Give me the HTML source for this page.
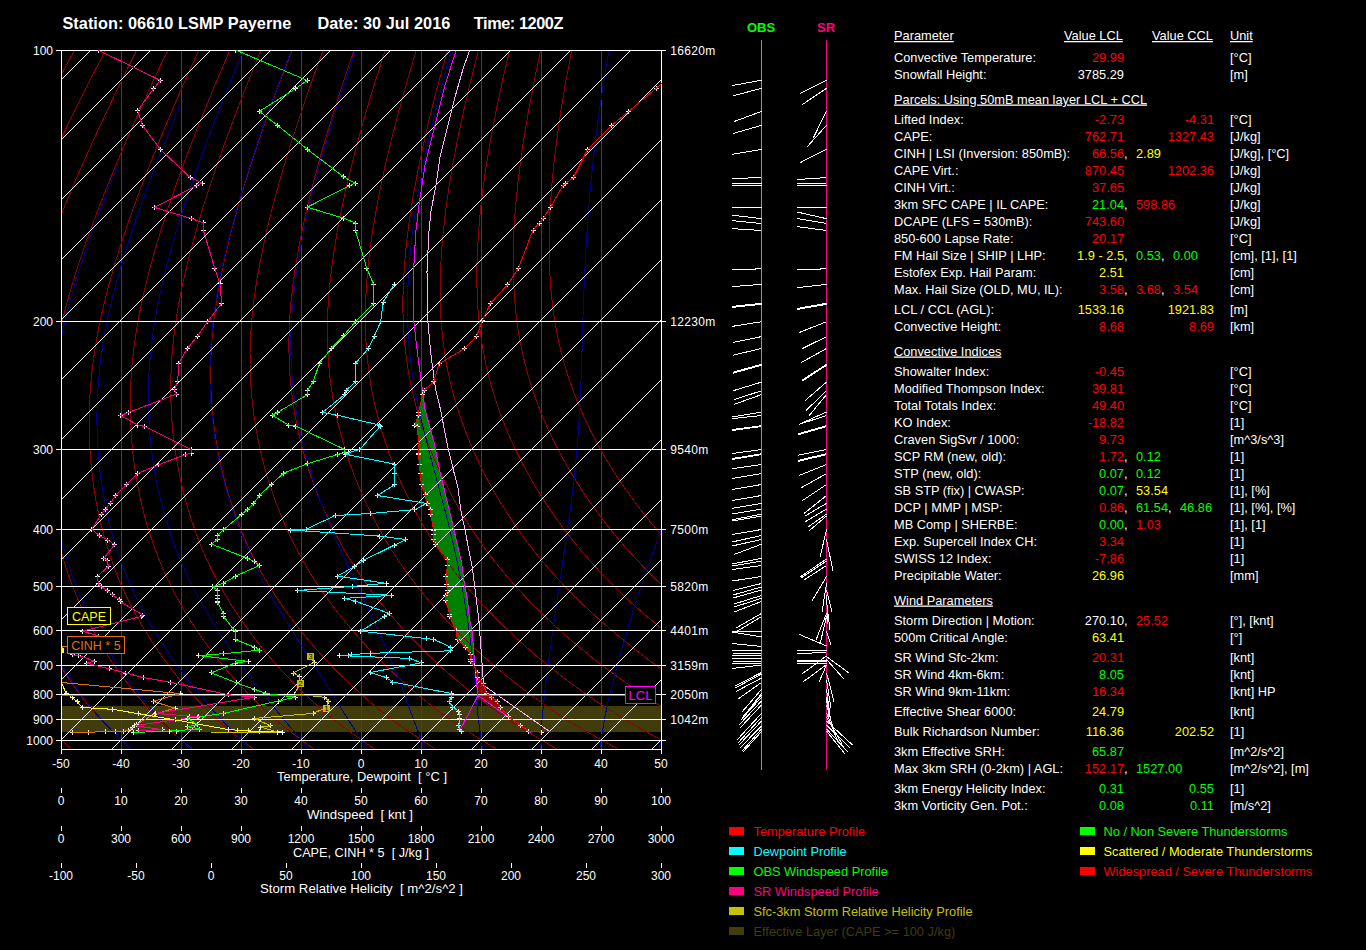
<!DOCTYPE html>
<html><head><meta charset="utf-8"><style>
html,body{margin:0;padding:0;background:#000;overflow:hidden}
svg{display:block}
text{font-family:'Liberation Sans', sans-serif}
</style></head><body><svg width="1366" height="950" viewBox="0 0 1366 950"><defs><clipPath id="pc"><rect x="61" y="50" width="601" height="700"/></clipPath></defs><g clip-path="url(#pc)"><rect x="61" y="706" width="600" height="26" fill="#403c0c"/><polygon points="422.9,394.0 422.8,394.3 418.4,412.4 418.4,415.3 414.7,425.7 417.5,426.5 418.9,449.5 418.9,453.6 418.9,454.5 419.1,464.4 420.3,473.1 421.4,484.6 425.0,494.9 427.2,503.4 430.2,509.6 430.9,514.0 433.6,530.3 433.0,534.9 433.0,539.5 435.9,544.8 447.5,559.8 447.5,565.6 445.8,576.6 446.3,584.1 447.5,590.5 445.8,595.7 445.8,600.3 449.8,614.3 449.8,616.5 456.0,630.9 457.4,639.0 465.5,647.1 470.7,654.5 470.0,659.6 470.7,661.9 474.0,665.8 474.3,666.5 472.2,631.0 469.5,618.9 467.5,600.0 464.5,584.1 461.4,562.1 453.9,529.7 449.8,512.0 440.5,474.3 433.9,441.9 425.0,409.5 422.9,394.0" fill="#008000" stroke="#008000" stroke-width="0.5"/><polygon points="474.5,667.0 477.1,672.6 477.6,677.4 483.4,683.2 486.6,693.7 491.8,697.4 497.1,701.0 500.3,707.4 508.7,716.8 509.0,717.0 500.0,711.0 478.0,695.7 475.1,669.0 474.9,667.0" fill="#900000" stroke="#900000" stroke-width="0.5"/><line x1="121.5" y1="50" x2="121.5" y2="749" stroke="#007000"/><line x1="181.5" y1="50" x2="181.5" y2="749" stroke="#007000"/><line x1="241.5" y1="50" x2="241.5" y2="749" stroke="#007000"/><line x1="301.5" y1="50" x2="301.5" y2="749" stroke="#007000"/><line x1="361.5" y1="50" x2="361.5" y2="749" stroke="#007000"/><line x1="421.5" y1="50" x2="421.5" y2="749" stroke="#007000"/><line x1="481.5" y1="50" x2="481.5" y2="749" stroke="#007000"/><line x1="541.5" y1="50" x2="541.5" y2="749" stroke="#007000"/><line x1="601.5" y1="50" x2="601.5" y2="749" stroke="#007000"/><polyline points="9.5,749.0 8.2,747.5 6.8,746.0 5.5,744.5 4.1,743.0 2.7,741.5 1.4,740.0 -0.0,738.4 -1.4,736.9 -2.8,735.3 -4.2,733.8 -5.6,732.2 -7.0,730.5 -8.3,728.9 -9.7,727.2 -11.1,725.6 -12.5,723.9 -13.9,722.1 -15.2,720.4 -16.6,718.6 -17.9,716.8 -19.3,714.9 -20.6,713.1 -21.9,711.2 -23.2,709.2 -24.5,707.3 -25.8,705.3 -27.1,703.3 -28.4,701.2 -29.7,699.2 -30.9,697.1 -32.2,694.9 -33.5,692.8 -34.8,690.6 -36.0,688.4 -37.3,686.2 -38.6,683.9 -39.8,681.6 -41.1,679.3 -42.3,677.0 -43.6,674.6 -44.8,672.1 -46.1,669.7 -47.3,667.2 -48.5,664.7 -49.7,662.1 -50.9,659.5 -52.1,656.8 -53.3,654.1 -54.4,651.4 -55.6,648.6 -56.8,645.8 -57.9,642.9 -59.0,640.0 -60.1,637.0 -61.3,634.0 -62.3,630.9 -63.4,627.8 -64.5,624.6 -65.6,621.4 -66.6,618.1 -67.7,614.8 -68.7,611.4 -69.7,607.9 -70.7,604.4 -71.6,600.8 -72.6,597.1 -73.5,593.4 -74.4,589.5 -75.2,585.6 -76.0,581.6 -76.8,577.6 -77.6,573.4 -78.3,569.1 -79.0,564.7 -79.6,560.2 -80.2,555.7 -80.7,551.0 -81.2,546.2 -81.7,541.2 -82.1,536.2 -82.4,531.0 -82.7,525.7 -83.0,520.2 -83.1,514.6 -83.2,508.8 -83.3,502.9 -83.2,496.8 -83.1,490.5 -82.9,484.0 -82.5,477.3 -82.1,470.4 -81.6,463.3 -80.9,456.0 -80.2,448.4 -79.2,440.5 -78.2,432.3 -76.9,423.8 -75.5,414.9 -73.8,405.7 -71.9,396.1 -69.7,386.0 -67.2,375.5 -64.4,364.4 -61.2,352.7 -57.6,340.3 -53.5,327.3 -48.8,313.4 -43.5,298.6 -37.5,282.9 -30.9,266.1 -23.4,248.2 -15.1,229.1 -5.9,208.7 4.4,186.8 15.7,163.3 28.3,138.1 42.2,110.9 57.6,81.6 74.5,50.0" fill="none" stroke="#900000" stroke-width="1" shape-rendering="crispEdges"/><polyline points="70.4,749.0 68.9,747.5 67.4,746.0 65.9,744.5 64.4,743.0 62.9,741.5 61.4,740.0 59.9,738.4 58.3,736.9 56.8,735.3 55.3,733.8 53.8,732.2 52.2,730.5 50.7,728.9 49.2,727.2 47.6,725.6 46.1,723.9 44.6,722.1 43.1,720.4 41.6,718.6 40.1,716.8 38.6,714.9 37.1,713.1 35.7,711.2 34.2,709.2 32.8,707.3 31.3,705.3 29.9,703.3 28.4,701.2 27.0,699.2 25.5,697.1 24.1,694.9 22.7,692.8 21.2,690.6 19.8,688.4 18.4,686.2 16.9,683.9 15.5,681.6 14.1,679.3 12.7,677.0 11.2,674.6 9.8,672.1 8.4,669.7 7.0,667.2 5.6,664.7 4.3,662.1 2.9,659.5 1.5,656.8 0.1,654.1 -1.2,651.4 -2.6,648.6 -3.9,645.8 -5.2,642.9 -6.5,640.0 -7.8,637.0 -9.1,634.0 -10.4,630.9 -11.7,627.8 -13.0,624.6 -14.3,621.4 -15.5,618.1 -16.8,614.8 -18.0,611.4 -19.2,607.9 -20.4,604.4 -21.6,600.8 -22.7,597.1 -23.8,593.4 -24.9,589.5 -26.0,585.6 -27.1,581.6 -28.1,577.6 -29.1,573.4 -30.0,569.1 -30.9,564.7 -31.8,560.2 -32.6,555.7 -33.4,551.0 -34.2,546.2 -34.9,541.2 -35.6,536.2 -36.2,531.0 -36.7,525.7 -37.2,520.2 -37.7,514.6 -38.0,508.8 -38.3,502.9 -38.6,496.8 -38.7,490.5 -38.8,484.0 -38.8,477.3 -38.7,470.4 -38.4,463.3 -38.1,456.0 -37.6,448.4 -37.1,440.5 -36.3,432.3 -35.4,423.8 -34.3,414.9 -33.0,405.7 -31.4,396.1 -29.6,386.0 -27.5,375.5 -25.1,364.4 -22.3,352.7 -19.1,340.3 -15.4,327.3 -11.1,313.4 -6.3,298.6 -0.8,282.9 5.4,266.1 12.4,248.2 20.2,229.1 28.9,208.7 38.6,186.8 49.4,163.3 61.3,138.1 74.6,110.9 89.3,81.6 105.6,50.0" fill="none" stroke="#900000" stroke-width="1" shape-rendering="crispEdges"/><polyline points="131.2,749.0 129.6,747.5 128.0,746.0 126.3,744.5 124.7,743.0 123.1,741.5 121.4,740.0 119.7,738.4 118.1,736.9 116.4,735.3 114.8,733.8 113.1,732.2 111.4,730.5 109.7,728.9 108.1,727.2 106.4,725.6 104.7,723.9 103.1,722.1 101.4,720.4 99.8,718.6 98.1,716.8 96.5,714.9 94.9,713.1 93.2,711.2 91.6,709.2 90.0,707.3 88.4,705.3 86.8,703.3 85.2,701.2 83.6,699.2 82.0,697.1 80.4,694.9 78.8,692.8 77.2,690.6 75.6,688.4 74.0,686.2 72.4,683.9 70.9,681.6 69.3,679.3 67.7,677.0 66.1,674.6 64.5,672.1 62.9,669.7 61.3,667.2 59.8,664.7 58.2,662.1 56.7,659.5 55.1,656.8 53.6,654.1 52.0,651.4 50.5,648.6 49.0,645.8 47.5,642.9 46.0,640.0 44.5,637.0 43.0,634.0 41.5,630.9 40.0,627.8 38.5,624.6 37.0,621.4 35.6,618.1 34.1,614.8 32.7,611.4 31.3,607.9 29.9,604.4 28.5,600.8 27.1,597.1 25.8,593.4 24.5,589.5 23.2,585.6 21.9,581.6 20.6,577.6 19.4,573.4 18.2,569.1 17.1,564.7 16.0,560.2 14.9,555.7 13.9,551.0 12.9,546.2 11.9,541.2 11.0,536.2 10.1,531.0 9.3,525.7 8.5,520.2 7.8,514.6 7.2,508.8 6.6,502.9 6.1,496.8 5.6,490.5 5.2,484.0 5.0,477.3 4.8,470.4 4.7,463.3 4.7,456.0 4.9,448.4 5.1,440.5 5.5,432.3 6.1,423.8 6.9,414.9 7.8,405.7 9.0,396.1 10.4,386.0 12.2,375.5 14.2,364.4 16.6,352.7 19.4,340.3 22.7,327.3 26.5,313.4 30.9,298.6 35.9,282.9 41.7,266.1 48.2,248.2 55.5,229.1 63.6,208.7 72.8,186.8 83.0,163.3 94.4,138.1 107.0,110.9 121.1,81.6 136.7,50.0" fill="none" stroke="#900000" stroke-width="1" shape-rendering="crispEdges"/><polyline points="192.0,749.0 190.3,747.5 188.5,746.0 186.8,744.5 185.0,743.0 183.2,741.5 181.4,740.0 179.6,738.4 177.8,736.9 176.0,735.3 174.2,733.8 172.4,732.2 170.6,730.5 168.8,728.9 167.0,727.2 165.2,725.6 163.3,723.9 161.5,722.1 159.7,720.4 157.9,718.6 156.1,716.8 154.4,714.9 152.6,713.1 150.8,711.2 149.1,709.2 147.3,707.3 145.5,705.3 143.8,703.3 142.0,701.2 140.3,699.2 138.5,697.1 136.8,694.9 135.0,692.8 133.2,690.6 131.5,688.4 129.7,686.2 128.0,683.9 126.2,681.6 124.4,679.3 122.7,677.0 120.9,674.6 119.2,672.1 117.4,669.7 115.7,667.2 113.9,664.7 112.2,662.1 110.4,659.5 108.7,656.8 107.0,654.1 105.3,651.4 103.6,648.6 101.9,645.8 100.1,642.9 98.4,640.0 96.8,637.0 95.1,634.0 93.4,630.9 91.7,627.8 90.0,624.6 88.4,621.4 86.7,618.1 85.1,614.8 83.4,611.4 81.8,607.9 80.2,604.4 78.6,600.8 77.0,597.1 75.4,593.4 73.9,589.5 72.3,585.6 70.8,581.6 69.4,577.6 67.9,573.4 66.5,569.1 65.1,564.7 63.8,560.2 62.4,555.7 61.2,551.0 59.9,546.2 58.7,541.2 57.5,536.2 56.4,531.0 55.3,525.7 54.3,520.2 53.3,514.6 52.4,508.8 51.5,502.9 50.7,496.8 50.0,490.5 49.3,484.0 48.7,477.3 48.2,470.4 47.8,463.3 47.6,456.0 47.4,448.4 47.3,440.5 47.4,432.3 47.6,423.8 48.0,414.9 48.6,405.7 49.5,396.1 50.5,386.0 51.8,375.5 53.5,364.4 55.5,352.7 57.9,340.3 60.8,327.3 64.1,313.4 68.1,298.6 72.7,282.9 77.9,266.1 83.9,248.2 90.7,229.1 98.4,208.7 107.0,186.8 116.6,163.3 127.4,138.1 139.5,110.9 152.9,81.6 167.8,50.0" fill="none" stroke="#900000" stroke-width="1" shape-rendering="crispEdges"/><polyline points="252.8,749.0 251.0,747.5 249.1,746.0 247.2,744.5 245.3,743.0 243.4,741.5 241.4,740.0 239.5,738.4 237.6,736.9 235.6,735.3 233.7,733.8 231.7,732.2 229.8,730.5 227.8,728.9 225.9,727.2 223.9,725.6 222.0,723.9 220.0,722.1 218.1,720.4 216.1,718.6 214.2,716.8 212.2,714.9 210.3,713.1 208.4,711.2 206.5,709.2 204.6,707.3 202.6,705.3 200.7,703.3 198.8,701.2 196.9,699.2 195.0,697.1 193.1,694.9 191.2,692.8 189.2,690.6 187.3,688.4 185.4,686.2 183.5,683.9 181.5,681.6 179.6,679.3 177.7,677.0 175.8,674.6 173.8,672.1 171.9,669.7 170.0,667.2 168.1,664.7 166.1,662.1 164.2,659.5 162.3,656.8 160.4,654.1 158.5,651.4 156.6,648.6 154.7,645.8 152.8,642.9 150.9,640.0 149.1,637.0 147.2,634.0 145.3,630.9 143.4,627.8 141.5,624.6 139.7,621.4 137.8,618.1 136.0,614.8 134.1,611.4 132.3,607.9 130.4,604.4 128.6,600.8 126.8,597.1 125.0,593.4 123.3,589.5 121.5,585.6 119.8,581.6 118.1,577.6 116.4,573.4 114.8,569.1 113.1,564.7 111.6,560.2 110.0,555.7 108.5,551.0 107.0,546.2 105.5,541.2 104.1,536.2 102.7,531.0 101.3,525.7 100.0,520.2 98.8,514.6 97.6,508.8 96.4,502.9 95.3,496.8 94.3,490.5 93.4,484.0 92.5,477.3 91.7,470.4 91.0,463.3 90.4,456.0 89.9,448.4 89.5,440.5 89.2,432.3 89.1,423.8 89.2,414.9 89.4,405.7 89.9,396.1 90.6,386.0 91.5,375.5 92.8,364.4 94.4,352.7 96.4,340.3 98.8,327.3 101.8,313.4 105.3,298.6 109.4,282.9 114.2,266.1 119.7,248.2 126.0,229.1 133.1,208.7 141.2,186.8 150.3,163.3 160.5,138.1 171.9,110.9 184.6,81.6 198.8,50.0" fill="none" stroke="#900000" stroke-width="1" shape-rendering="crispEdges"/><polyline points="313.6,749.0 311.6,747.5 309.6,746.0 307.6,744.5 305.6,743.0 303.5,741.5 301.5,740.0 299.4,738.4 297.3,736.9 295.2,735.3 293.1,733.8 291.1,732.2 289.0,730.5 286.9,728.9 284.8,727.2 282.7,725.6 280.6,723.9 278.5,722.1 276.4,720.4 274.3,718.6 272.2,716.8 270.1,714.9 268.0,713.1 266.0,711.2 263.9,709.2 261.8,707.3 259.8,705.3 257.7,703.3 255.6,701.2 253.6,699.2 251.5,697.1 249.4,694.9 247.3,692.8 245.3,690.6 243.2,688.4 241.1,686.2 239.0,683.9 236.9,681.6 234.8,679.3 232.7,677.0 230.6,674.6 228.5,672.1 226.4,669.7 224.3,667.2 222.2,664.7 220.1,662.1 218.0,659.5 215.9,656.8 213.8,654.1 211.8,651.4 209.7,648.6 207.6,645.8 205.5,642.9 203.4,640.0 201.4,637.0 199.3,634.0 197.2,630.9 195.1,627.8 193.1,624.6 191.0,621.4 188.9,618.1 186.9,614.8 184.8,611.4 182.8,607.9 180.7,604.4 178.7,600.8 176.7,597.1 174.7,593.4 172.7,589.5 170.7,585.6 168.8,581.6 166.8,577.6 164.9,573.4 163.0,569.1 161.2,564.7 159.3,560.2 157.5,555.7 155.8,551.0 154.0,546.2 152.3,541.2 150.6,536.2 149.0,531.0 147.3,525.7 145.8,520.2 144.2,514.6 142.8,508.8 141.3,502.9 140.0,496.8 138.7,490.5 137.4,484.0 136.2,477.3 135.1,470.4 134.1,463.3 133.2,456.0 132.4,448.4 131.7,440.5 131.1,432.3 130.6,423.8 130.4,414.9 130.3,405.7 130.3,396.1 130.7,386.0 131.2,375.5 132.1,364.4 133.3,352.7 134.9,340.3 136.9,327.3 139.4,313.4 142.5,298.6 146.2,282.9 150.5,266.1 155.5,248.2 161.3,229.1 167.9,208.7 175.4,186.8 183.9,163.3 193.5,138.1 204.3,110.9 216.4,81.6 229.9,50.0" fill="none" stroke="#900000" stroke-width="1" shape-rendering="crispEdges"/><polyline points="374.5,749.0 372.3,747.5 370.2,746.0 368.0,744.5 365.8,743.0 363.7,741.5 361.5,740.0 359.3,738.4 357.1,736.9 354.8,735.3 352.6,733.8 350.4,732.2 348.1,730.5 345.9,728.9 343.7,727.2 341.4,725.6 339.2,723.9 336.9,722.1 334.7,720.4 332.5,718.6 330.2,716.8 328.0,714.9 325.8,713.1 323.5,711.2 321.3,709.2 319.1,707.3 316.9,705.3 314.6,703.3 312.4,701.2 310.2,699.2 308.0,697.1 305.7,694.9 303.5,692.8 301.3,690.6 299.0,688.4 296.8,686.2 294.5,683.9 292.2,681.6 290.0,679.3 287.7,677.0 285.4,674.6 283.2,672.1 280.9,669.7 278.6,667.2 276.3,664.7 274.1,662.1 271.8,659.5 269.5,656.8 267.3,654.1 265.0,651.4 262.7,648.6 260.5,645.8 258.2,642.9 255.9,640.0 253.6,637.0 251.4,634.0 249.1,630.9 246.8,627.8 244.6,624.6 242.3,621.4 240.0,618.1 237.8,614.8 235.5,611.4 233.2,607.9 231.0,604.4 228.8,600.8 226.5,597.1 224.3,593.4 222.1,589.5 219.9,585.6 217.7,581.6 215.6,577.6 213.4,573.4 211.3,569.1 209.2,564.7 207.1,560.2 205.1,555.7 203.0,551.0 201.0,546.2 199.1,541.2 197.1,536.2 195.2,531.0 193.4,525.7 191.5,520.2 189.7,514.6 188.0,508.8 186.3,502.9 184.6,496.8 183.0,490.5 181.5,484.0 180.0,477.3 178.6,470.4 177.3,463.3 176.0,456.0 174.9,448.4 173.9,440.5 172.9,432.3 172.2,423.8 171.5,414.9 171.1,405.7 170.8,396.1 170.7,386.0 170.9,375.5 171.4,364.4 172.2,352.7 173.4,340.3 175.0,327.3 177.1,313.4 179.7,298.6 182.9,282.9 186.8,266.1 191.3,248.2 196.6,229.1 202.6,208.7 209.6,186.8 217.6,163.3 226.6,138.1 236.7,110.9 248.2,81.6 261.0,50.0" fill="none" stroke="#900000" stroke-width="1" shape-rendering="crispEdges"/><polyline points="435.3,749.0 433.0,747.5 430.7,746.0 428.4,744.5 426.1,743.0 423.8,741.5 421.5,740.0 419.1,738.4 416.8,736.9 414.4,735.3 412.1,733.8 409.7,732.2 407.3,730.5 404.9,728.9 402.6,727.2 400.2,725.6 397.8,723.9 395.4,722.1 393.0,720.4 390.6,718.6 388.2,716.8 385.9,714.9 383.5,713.1 381.1,711.2 378.7,709.2 376.4,707.3 374.0,705.3 371.6,703.3 369.2,701.2 366.8,699.2 364.5,697.1 362.1,694.9 359.7,692.8 357.3,690.6 354.9,688.4 352.4,686.2 350.0,683.9 347.6,681.6 345.2,679.3 342.7,677.0 340.3,674.6 337.8,672.1 335.4,669.7 332.9,667.2 330.5,664.7 328.0,662.1 325.6,659.5 323.1,656.8 320.7,654.1 318.2,651.4 315.8,648.6 313.3,645.8 310.9,642.9 308.4,640.0 305.9,637.0 303.5,634.0 301.0,630.9 298.5,627.8 296.1,624.6 293.6,621.4 291.1,618.1 288.7,614.8 286.2,611.4 283.7,607.9 281.3,604.4 278.8,600.8 276.4,597.1 273.9,593.4 271.5,589.5 269.1,585.6 266.7,581.6 264.3,577.6 261.9,573.4 259.6,569.1 257.2,564.7 254.9,560.2 252.6,555.7 250.3,551.0 248.1,546.2 245.9,541.2 243.7,536.2 241.5,531.0 239.4,525.7 237.3,520.2 235.2,514.6 233.2,508.8 231.2,502.9 229.2,496.8 227.4,490.5 225.5,484.0 223.8,477.3 222.0,470.4 220.4,463.3 218.9,456.0 217.4,448.4 216.0,440.5 214.8,432.3 213.7,423.8 212.7,414.9 211.9,405.7 211.2,396.1 210.8,386.0 210.6,375.5 210.7,364.4 211.1,352.7 211.9,340.3 213.1,327.3 214.7,313.4 216.9,298.6 219.7,282.9 223.0,266.1 227.1,248.2 231.8,229.1 237.4,208.7 243.8,186.8 251.2,163.3 259.6,138.1 269.1,110.9 279.9,81.6 292.1,50.0" fill="none" stroke="#900000" stroke-width="1" shape-rendering="crispEdges"/><polyline points="496.1,749.0 493.7,747.5 491.3,746.0 488.9,744.5 486.4,743.0 484.0,741.5 481.5,740.0 479.0,738.4 476.5,736.9 474.0,735.3 471.5,733.8 469.0,732.2 466.5,730.5 464.0,728.9 461.5,727.2 458.9,725.6 456.4,723.9 453.9,722.1 451.3,720.4 448.8,718.6 446.3,716.8 443.7,714.9 441.2,713.1 438.7,711.2 436.2,709.2 433.6,707.3 431.1,705.3 428.6,703.3 426.0,701.2 423.5,699.2 420.9,697.1 418.4,694.9 415.8,692.8 413.3,690.6 410.7,688.4 408.1,686.2 405.5,683.9 402.9,681.6 400.3,679.3 397.7,677.0 395.1,674.6 392.5,672.1 389.9,669.7 387.3,667.2 384.6,664.7 382.0,662.1 379.4,659.5 376.7,656.8 374.1,654.1 371.5,651.4 368.8,648.6 366.2,645.8 363.5,642.9 360.9,640.0 358.2,637.0 355.6,634.0 352.9,630.9 350.3,627.8 347.6,624.6 344.9,621.4 342.2,618.1 339.6,614.8 336.9,611.4 334.2,607.9 331.5,604.4 328.9,600.8 326.2,597.1 323.6,593.4 320.9,589.5 318.3,585.6 315.6,581.6 313.0,577.6 310.4,573.4 307.8,569.1 305.3,564.7 302.7,560.2 300.2,555.7 297.6,551.0 295.1,546.2 292.7,541.2 290.2,536.2 287.8,531.0 285.4,525.7 283.0,520.2 280.7,514.6 278.4,508.8 276.1,502.9 273.9,496.8 271.7,490.5 269.6,484.0 267.5,477.3 265.5,470.4 263.6,463.3 261.7,456.0 259.9,448.4 258.2,440.5 256.6,432.3 255.2,423.8 253.9,414.9 252.7,405.7 251.7,396.1 250.9,386.0 250.3,375.5 250.0,364.4 250.0,352.7 250.4,340.3 251.2,327.3 252.4,313.4 254.1,298.6 256.4,282.9 259.3,266.1 262.9,248.2 267.1,229.1 272.1,208.7 278.0,186.8 284.8,163.3 292.6,138.1 301.6,110.9 311.7,81.6 323.1,50.0" fill="none" stroke="#900000" stroke-width="1" shape-rendering="crispEdges"/><polyline points="556.9,749.0 554.4,747.5 551.9,746.0 549.3,744.5 546.7,743.0 544.1,741.5 541.5,740.0 538.9,738.4 536.3,736.9 533.6,735.3 531.0,733.8 528.4,732.2 525.7,730.5 523.0,728.9 520.4,727.2 517.7,725.6 515.0,723.9 512.3,722.1 509.6,720.4 507.0,718.6 504.3,716.8 501.6,714.9 498.9,713.1 496.3,711.2 493.6,709.2 490.9,707.3 488.2,705.3 485.5,703.3 482.8,701.2 480.1,699.2 477.4,697.1 474.7,694.9 472.0,692.8 469.3,690.6 466.5,688.4 463.8,686.2 461.0,683.9 458.3,681.6 455.5,679.3 452.7,677.0 450.0,674.6 447.2,672.1 444.4,669.7 441.6,667.2 438.8,664.7 436.0,662.1 433.2,659.5 430.4,656.8 427.5,654.1 424.7,651.4 421.9,648.6 419.1,645.8 416.2,642.9 413.4,640.0 410.5,637.0 407.7,634.0 404.8,630.9 402.0,627.8 399.1,624.6 396.2,621.4 393.4,618.1 390.5,614.8 387.6,611.4 384.7,607.9 381.8,604.4 378.9,600.8 376.1,597.1 373.2,593.4 370.3,589.5 367.4,585.6 364.6,581.6 361.7,577.6 358.9,573.4 356.1,569.1 353.3,564.7 350.5,560.2 347.7,555.7 344.9,551.0 342.2,546.2 339.5,541.2 336.8,536.2 334.1,531.0 331.4,525.7 328.8,520.2 326.2,514.6 323.6,508.8 321.0,502.9 318.5,496.8 316.1,490.5 313.6,484.0 311.3,477.3 309.0,470.4 306.7,463.3 304.5,456.0 302.4,448.4 300.4,440.5 298.5,432.3 296.7,423.8 295.0,414.9 293.5,405.7 292.1,396.1 291.0,386.0 290.0,375.5 289.3,364.4 289.0,352.7 288.9,340.3 289.3,327.3 290.0,313.4 291.3,298.6 293.2,282.9 295.6,266.1 298.6,248.2 302.4,229.1 306.9,208.7 312.2,186.8 318.5,163.3 325.7,138.1 334.0,110.9 343.5,81.6 354.2,50.0" fill="none" stroke="#900000" stroke-width="1" shape-rendering="crispEdges"/><polyline points="617.8,749.0 615.1,747.5 612.4,746.0 609.7,744.5 607.0,743.0 604.3,741.5 601.5,740.0 598.8,738.4 596.0,736.9 593.3,735.3 590.5,733.8 587.7,732.2 584.9,730.5 582.1,728.9 579.3,727.2 576.4,725.6 573.6,723.9 570.8,722.1 568.0,720.4 565.1,718.6 562.3,716.8 559.5,714.9 556.7,713.1 553.8,711.2 551.0,709.2 548.2,707.3 545.3,705.3 542.5,703.3 539.6,701.2 536.8,699.2 533.9,697.1 531.0,694.9 528.2,692.8 525.3,690.6 522.4,688.4 519.5,686.2 516.5,683.9 513.6,681.6 510.7,679.3 507.7,677.0 504.8,674.6 501.8,672.1 498.9,669.7 495.9,667.2 492.9,664.7 489.9,662.1 487.0,659.5 484.0,656.8 481.0,654.1 478.0,651.4 474.9,648.6 471.9,645.8 468.9,642.9 465.9,640.0 462.8,637.0 459.8,634.0 456.7,630.9 453.7,627.8 450.6,624.6 447.5,621.4 444.5,618.1 441.4,614.8 438.3,611.4 435.2,607.9 432.1,604.4 429.0,600.8 425.9,597.1 422.8,593.4 419.7,589.5 416.6,585.6 413.5,581.6 410.5,577.6 407.4,573.4 404.4,569.1 401.3,564.7 398.3,560.2 395.2,555.7 392.2,551.0 389.2,546.2 386.3,541.2 383.3,536.2 380.3,531.0 377.4,525.7 374.5,520.2 371.6,514.6 368.8,508.8 365.9,502.9 363.2,496.8 360.4,490.5 357.7,484.0 355.0,477.3 352.4,470.4 349.9,463.3 347.4,456.0 344.9,448.4 342.6,440.5 340.3,432.3 338.2,423.8 336.2,414.9 334.3,405.7 332.6,396.1 331.0,386.0 329.7,375.5 328.7,364.4 327.9,352.7 327.4,340.3 327.3,327.3 327.7,313.4 328.5,298.6 329.9,282.9 331.9,266.1 334.4,248.2 337.7,229.1 341.6,208.7 346.4,186.8 352.1,163.3 358.7,138.1 366.4,110.9 375.2,81.6 385.3,50.0" fill="none" stroke="#900000" stroke-width="1" shape-rendering="crispEdges"/><polyline points="678.6,749.0 675.8,747.5 673.0,746.0 670.1,744.5 667.3,743.0 664.4,741.5 661.6,740.0 658.7,738.4 655.8,736.9 652.9,735.3 649.9,733.8 647.0,732.2 644.1,730.5 641.1,728.9 638.2,727.2 635.2,725.6 632.2,723.9 629.3,722.1 626.3,720.4 623.3,718.6 620.3,716.8 617.4,714.9 614.4,713.1 611.4,711.2 608.4,709.2 605.4,707.3 602.4,705.3 599.4,703.3 596.4,701.2 593.4,699.2 590.4,697.1 587.4,694.9 584.3,692.8 581.3,690.6 578.2,688.4 575.1,686.2 572.1,683.9 569.0,681.6 565.9,679.3 562.8,677.0 559.6,674.6 556.5,672.1 553.4,669.7 550.2,667.2 547.1,664.7 543.9,662.1 540.7,659.5 537.6,656.8 534.4,654.1 531.2,651.4 528.0,648.6 524.8,645.8 521.6,642.9 518.4,640.0 515.1,637.0 511.9,634.0 508.7,630.9 505.4,627.8 502.1,624.6 498.9,621.4 495.6,618.1 492.3,614.8 489.0,611.4 485.7,607.9 482.4,604.4 479.1,600.8 475.7,597.1 472.4,593.4 469.1,589.5 465.8,585.6 462.5,581.6 459.2,577.6 455.9,573.4 452.6,569.1 449.3,564.7 446.1,560.2 442.8,555.7 439.5,551.0 436.3,546.2 433.1,541.2 429.8,536.2 426.6,531.0 423.4,525.7 420.3,520.2 417.1,514.6 414.0,508.8 410.9,502.9 407.8,496.8 404.8,490.5 401.7,484.0 398.8,477.3 395.9,470.4 393.0,463.3 390.2,456.0 387.4,448.4 384.8,440.5 382.2,432.3 379.7,423.8 377.3,414.9 375.1,405.7 373.0,396.1 371.1,386.0 369.4,375.5 368.0,364.4 366.8,352.7 365.9,340.3 365.4,327.3 365.3,313.4 365.7,298.6 366.7,282.9 368.1,266.1 370.2,248.2 372.9,229.1 376.4,208.7 380.6,186.8 385.7,163.3 391.8,138.1 398.8,110.9 407.0,81.6 416.4,50.0" fill="none" stroke="#900000" stroke-width="1" shape-rendering="crispEdges"/><polyline points="739.4,749.0 736.5,747.5 733.5,746.0 730.6,744.5 727.6,743.0 724.6,741.5 721.6,740.0 718.5,738.4 715.5,736.9 712.5,735.3 709.4,733.8 706.3,732.2 703.2,730.5 700.2,728.9 697.1,727.2 693.9,725.6 690.8,723.9 687.7,722.1 684.6,720.4 681.5,718.6 678.4,716.8 675.2,714.9 672.1,713.1 669.0,711.2 665.8,709.2 662.7,707.3 659.6,705.3 656.4,703.3 653.2,701.2 650.1,699.2 646.9,697.1 643.7,694.9 640.5,692.8 637.3,690.6 634.1,688.4 630.8,686.2 627.6,683.9 624.3,681.6 621.0,679.3 617.8,677.0 614.5,674.6 611.2,672.1 607.9,669.7 604.5,667.2 601.2,664.7 597.9,662.1 594.5,659.5 591.2,656.8 587.8,654.1 584.4,651.4 581.1,648.6 577.7,645.8 574.3,642.9 570.9,640.0 567.4,637.0 564.0,634.0 560.6,630.9 557.1,627.8 553.6,624.6 550.2,621.4 546.7,618.1 543.2,614.8 539.7,611.4 536.2,607.9 532.6,604.4 529.1,600.8 525.6,597.1 522.1,593.4 518.5,589.5 515.0,585.6 511.5,581.6 507.9,577.6 504.4,573.4 500.9,569.1 497.4,564.7 493.8,560.2 490.3,555.7 486.8,551.0 483.3,546.2 479.8,541.2 476.4,536.2 472.9,531.0 469.4,525.7 466.0,520.2 462.6,514.6 459.2,508.8 455.8,502.9 452.4,496.8 449.1,490.5 445.8,484.0 442.5,477.3 439.3,470.4 436.1,463.3 433.0,456.0 430.0,448.4 427.0,440.5 424.0,432.3 421.2,423.8 418.5,414.9 415.9,405.7 413.5,396.1 411.2,386.0 409.1,375.5 407.3,364.4 405.7,352.7 404.4,340.3 403.5,327.3 403.0,313.4 402.9,298.6 403.4,282.9 404.4,266.1 406.0,248.2 408.2,229.1 411.1,208.7 414.8,186.8 419.4,163.3 424.8,138.1 431.2,110.9 438.8,81.6 447.5,50.0" fill="none" stroke="#900000" stroke-width="1" shape-rendering="crispEdges"/><polyline points="800.2,749.0 797.2,747.5 794.1,746.0 791.0,744.5 787.9,743.0 784.7,741.5 781.6,740.0 778.4,738.4 775.3,736.9 772.1,735.3 768.9,733.8 765.6,732.2 762.4,730.5 759.2,728.9 756.0,727.2 752.7,725.6 749.4,723.9 746.2,722.1 742.9,720.4 739.7,718.6 736.4,716.8 733.1,714.9 729.8,713.1 726.5,711.2 723.3,709.2 720.0,707.3 716.7,705.3 713.4,703.3 710.0,701.2 706.7,699.2 703.4,697.1 700.0,694.9 696.7,692.8 693.3,690.6 689.9,688.4 686.5,686.2 683.1,683.9 679.7,681.6 676.2,679.3 672.8,677.0 669.3,674.6 665.8,672.1 662.3,669.7 658.9,667.2 655.3,664.7 651.8,662.1 648.3,659.5 644.8,656.8 641.2,654.1 637.7,651.4 634.1,648.6 630.5,645.8 627.0,642.9 623.4,640.0 619.7,637.0 616.1,634.0 612.5,630.9 608.8,627.8 605.2,624.6 601.5,621.4 597.8,618.1 594.1,614.8 590.4,611.4 586.7,607.9 582.9,604.4 579.2,600.8 575.4,597.1 571.7,593.4 567.9,589.5 564.2,585.6 560.4,581.6 556.7,577.6 552.9,573.4 549.1,569.1 545.4,564.7 541.6,560.2 537.9,555.7 534.1,551.0 530.4,546.2 526.6,541.2 522.9,536.2 519.2,531.0 515.5,525.7 511.8,520.2 508.1,514.6 504.4,508.8 500.7,502.9 497.1,496.8 493.4,490.5 489.9,484.0 486.3,477.3 482.8,470.4 479.3,463.3 475.9,456.0 472.5,448.4 469.1,440.5 465.9,432.3 462.7,423.8 459.7,414.9 456.7,405.7 453.9,396.1 451.3,386.0 448.8,375.5 446.6,364.4 444.6,352.7 442.9,340.3 441.6,327.3 440.6,313.4 440.1,298.6 440.1,282.9 440.7,266.1 441.8,248.2 443.5,229.1 445.9,208.7 449.0,186.8 453.0,163.3 457.8,138.1 463.7,110.9 470.5,81.6 478.5,50.0" fill="none" stroke="#900000" stroke-width="1" shape-rendering="crispEdges"/><polyline points="861.1,749.0 857.9,747.5 854.6,746.0 851.4,744.5 848.2,743.0 844.9,741.5 841.6,740.0 838.3,738.4 835.0,736.9 831.7,735.3 828.3,733.8 825.0,732.2 821.6,730.5 818.2,728.9 814.8,727.2 811.5,725.6 808.1,723.9 804.7,722.1 801.2,720.4 797.8,718.6 794.4,716.8 791.0,714.9 787.6,713.1 784.1,711.2 780.7,709.2 777.2,707.3 773.8,705.3 770.3,703.3 766.8,701.2 763.4,699.2 759.9,697.1 756.4,694.9 752.8,692.8 749.3,690.6 745.7,688.4 742.2,686.2 738.6,683.9 735.0,681.6 731.4,679.3 727.8,677.0 724.1,674.6 720.5,672.1 716.8,669.7 713.2,667.2 709.5,664.7 705.8,662.1 702.1,659.5 698.4,656.8 694.7,654.1 690.9,651.4 687.2,648.6 683.4,645.8 679.6,642.9 675.8,640.0 672.0,637.0 668.2,634.0 664.4,630.9 660.5,627.8 656.7,624.6 652.8,621.4 648.9,618.1 645.0,614.8 641.1,611.4 637.1,607.9 633.2,604.4 629.2,600.8 625.3,597.1 621.3,593.4 617.3,589.5 613.4,585.6 609.4,581.6 605.4,577.6 601.4,573.4 597.4,569.1 593.4,564.7 589.4,560.2 585.4,555.7 581.4,551.0 577.4,546.2 573.4,541.2 569.4,536.2 565.5,531.0 561.5,525.7 557.5,520.2 553.5,514.6 549.6,508.8 545.6,502.9 541.7,496.8 537.8,490.5 533.9,484.0 530.1,477.3 526.2,470.4 522.4,463.3 518.7,456.0 515.0,448.4 511.3,440.5 507.7,432.3 504.2,423.8 500.8,414.9 497.5,405.7 494.4,396.1 491.3,386.0 488.5,375.5 485.9,364.4 483.5,352.7 481.4,340.3 479.7,327.3 478.3,313.4 477.3,298.6 476.9,282.9 476.9,266.1 477.5,248.2 478.8,229.1 480.6,208.7 483.2,186.8 486.6,163.3 490.9,138.1 496.1,110.9 502.3,81.6 509.6,50.0" fill="none" stroke="#900000" stroke-width="1" shape-rendering="crispEdges"/><polyline points="921.9,749.0 918.5,747.5 915.2,746.0 911.8,744.5 908.4,743.0 905.0,741.5 901.6,740.0 898.2,738.4 894.7,736.9 891.3,735.3 887.8,733.8 884.3,732.2 880.8,730.5 877.3,728.9 873.7,727.2 870.2,725.6 866.7,723.9 863.1,722.1 859.6,720.4 856.0,718.6 852.4,716.8 848.9,714.9 845.3,713.1 841.7,711.2 838.1,709.2 834.5,707.3 830.9,705.3 827.3,703.3 823.6,701.2 820.0,699.2 816.4,697.1 812.7,694.9 809.0,692.8 805.3,690.6 801.6,688.4 797.9,686.2 794.1,683.9 790.4,681.6 786.6,679.3 782.8,677.0 779.0,674.6 775.2,672.1 771.3,669.7 767.5,667.2 763.6,664.7 759.8,662.1 755.9,659.5 752.0,656.8 748.1,654.1 744.2,651.4 740.2,648.6 736.3,645.8 732.3,642.9 728.3,640.0 724.3,637.0 720.3,634.0 716.3,630.9 712.2,627.8 708.2,624.6 704.1,621.4 700.0,618.1 695.9,614.8 691.8,611.4 687.6,607.9 683.5,604.4 679.3,600.8 675.1,597.1 670.9,593.4 666.7,589.5 662.5,585.6 658.3,581.6 654.1,577.6 649.9,573.4 645.7,569.1 641.4,564.7 637.2,560.2 633.0,555.7 628.7,551.0 624.5,546.2 620.2,541.2 616.0,536.2 611.7,531.0 607.5,525.7 603.2,520.2 599.0,514.6 594.8,508.8 590.6,502.9 586.3,496.8 582.1,490.5 578.0,484.0 573.8,477.3 569.7,470.4 565.6,463.3 561.5,456.0 557.5,448.4 553.5,440.5 549.6,432.3 545.8,423.8 542.0,414.9 538.3,405.7 534.8,396.1 531.4,386.0 528.2,375.5 525.2,364.4 522.4,352.7 519.9,340.3 517.7,327.3 515.9,313.4 514.6,298.6 513.6,282.9 513.2,266.1 513.3,248.2 514.0,229.1 515.4,208.7 517.5,186.8 520.3,163.3 523.9,138.1 528.5,110.9 534.1,81.6 540.7,50.0" fill="none" stroke="#900000" stroke-width="1" shape-rendering="crispEdges"/><polyline points="982.7,749.0 979.2,747.5 975.8,746.0 972.3,744.5 968.7,743.0 965.2,741.5 961.6,740.0 958.1,738.4 954.5,736.9 950.9,735.3 947.3,733.8 943.6,732.2 940.0,730.5 936.3,728.9 932.6,727.2 929.0,725.6 925.3,723.9 921.6,722.1 917.9,720.4 914.2,718.6 910.5,716.8 906.7,714.9 903.0,713.1 899.3,711.2 895.5,709.2 891.8,707.3 888.0,705.3 884.2,703.3 880.5,701.2 876.7,699.2 872.8,697.1 869.0,694.9 865.2,692.8 861.3,690.6 857.4,688.4 853.5,686.2 849.6,683.9 845.7,681.6 841.8,679.3 837.8,677.0 833.8,674.6 829.8,672.1 825.8,669.7 821.8,667.2 817.8,664.7 813.7,662.1 809.7,659.5 805.6,656.8 801.5,654.1 797.4,651.4 793.3,648.6 789.1,645.8 785.0,642.9 780.8,640.0 776.6,637.0 772.4,634.0 768.2,630.9 764.0,627.8 759.7,624.6 755.4,621.4 751.1,618.1 746.8,614.8 742.5,611.4 738.1,607.9 733.7,604.4 729.4,600.8 725.0,597.1 720.6,593.4 716.2,589.5 711.7,585.6 707.3,581.6 702.8,577.6 698.4,573.4 693.9,569.1 689.5,564.7 685.0,560.2 680.5,555.7 676.0,551.0 671.5,546.2 667.0,541.2 662.5,536.2 658.0,531.0 653.5,525.7 649.0,520.2 644.5,514.6 640.0,508.8 635.5,502.9 631.0,496.8 626.5,490.5 622.0,484.0 617.6,477.3 613.1,470.4 608.7,463.3 604.3,456.0 600.0,448.4 595.7,440.5 591.4,432.3 587.3,423.8 583.2,414.9 579.1,405.7 575.3,396.1 571.5,386.0 567.9,375.5 564.5,364.4 561.3,352.7 558.4,340.3 555.8,327.3 553.6,313.4 551.8,298.6 550.4,282.9 549.5,266.1 549.1,248.2 549.3,229.1 550.1,208.7 551.7,186.8 553.9,163.3 557.0,138.1 560.9,110.9 565.8,81.6 571.8,50.0" fill="none" stroke="#900000" stroke-width="1" shape-rendering="crispEdges"/><polyline points="9.5,749.0 6.8,746.0 4.0,742.9 1.2,739.8 -0.4,738.1 -1.9,736.3 -3.5,734.5 -5.1,732.7 -6.6,730.9 -8.2,729.0 -9.8,727.2 -11.3,725.3 -12.9,723.3 -14.4,721.4 -16.0,719.3 -17.5,717.3 -19.0,715.2 -20.5,713.1 -22.0,711.0 -23.5,708.8 -24.9,706.5 -26.4,704.3 -27.9,702.0 -29.3,699.6 -30.8,697.3 -32.2,694.9 -33.6,692.4 -35.1,690.0 -36.5,687.4 -38.0,684.9 -39.4,682.3 -40.8,679.7 -42.2,677.0 -43.7,674.3 -45.1,671.6 -46.5,668.8 -47.8,665.9 -49.2,663.0 -50.6,660.1 -51.9,657.1 -53.3,654.0 -54.6,650.9 -55.9,647.8 -57.2,644.5 -58.5,641.3 -59.8,637.9 -61.0,634.5 -62.3,631.0 -63.5,627.5 -64.7,623.9 -65.9,620.2 -67.1,616.5 -68.3,612.7 -69.4,608.8 -70.5,604.8 -71.6,600.7 -72.7,596.6 -73.7,592.3 -74.7,587.9 -75.7,583.5 -76.6,578.9 -77.4,574.2 -78.3,569.3 -79.0,564.4 -79.7,559.3 -80.4,554.1 -81.0,548.7 -81.6,543.2 -82.0,537.5 -82.5,531.7 -82.8,525.6 -83.1,519.4 -83.2,513.0 -83.3,506.5 -83.3,499.6 -83.2,492.6 -83.0,485.3 -82.7,477.8 -82.2,470.0 -81.6,461.9 -80.8,453.5 -79.9,444.7 -78.7,435.6 -77.4,426.1 -75.8,416.2 -73.9,405.8 -71.8,394.9 -69.2,383.4 -66.3,371.2 -62.9,358.3 -59.0,344.7 -57.6,339.9" fill="none" stroke="#000090" stroke-width="1" shape-rendering="crispEdges"/><polyline points="70.2,749.0 67.2,746.0 64.2,742.9 61.2,739.8 59.5,738.1 57.8,736.3 56.1,734.5 54.4,732.7 52.7,730.9 51.0,729.0 49.3,727.2 47.6,725.3 45.8,723.3 44.1,721.4 42.5,719.3 40.8,717.3 39.1,715.2 37.4,713.1 35.8,711.0 34.2,708.8 32.5,706.5 30.9,704.3 29.3,702.0 27.6,699.6 26.0,697.3 24.4,694.9 22.8,692.4 21.2,690.0 19.5,687.4 17.9,684.9 16.3,682.3 14.7,679.7 13.1,677.0 11.5,674.3 9.9,671.6 8.3,668.8 6.7,665.9 5.1,663.0 3.6,660.1 2.0,657.1 0.5,654.0 -1.1,650.9 -2.6,647.8 -4.1,644.5 -5.6,641.3 -7.1,637.9 -8.6,634.5 -10.0,631.0 -11.5,627.5 -12.9,623.9 -14.4,620.2 -15.8,616.5 -17.2,612.7 -18.6,608.8 -19.9,604.8 -21.3,600.7 -22.6,596.6 -23.8,592.3 -25.1,587.9 -26.3,583.5 -27.5,578.9 -28.6,574.2 -29.7,569.3 -30.7,564.4 -31.7,559.3 -32.6,554.1 -33.5,548.7 -34.4,543.2 -35.1,537.5 -35.8,531.7 -36.5,525.6 -37.1,519.4 -37.5,513.0 -38.0,506.5 -38.3,499.6 -38.5,492.6 -38.6,485.3 -38.6,477.8 -38.5,470.0 -38.2,461.9 -37.8,453.5 -37.2,444.7 -36.5,435.6 -35.5,426.1 -34.3,416.2 -32.9,405.8 -31.1,394.9 -29.0,383.4 -26.5,371.2 -23.6,358.3 -20.2,344.7 -16.1,330.1 -11.4,314.5 -6.0,297.8 -1.8,286.0" fill="none" stroke="#000090" stroke-width="1" shape-rendering="crispEdges"/><polyline points="130.7,749.0 127.6,746.0 124.4,742.9 121.2,739.8 119.4,738.1 117.6,736.3 115.8,734.5 114.0,732.7 112.1,730.9 110.3,729.0 108.5,727.2 106.7,725.3 104.8,723.3 103.0,721.4 101.2,719.3 99.4,717.3 97.6,715.2 95.8,713.1 94.0,711.0 92.2,708.8 90.4,706.5 88.6,704.3 86.8,702.0 85.0,699.6 83.3,697.3 81.5,694.9 79.7,692.4 77.9,690.0 76.1,687.4 74.3,684.9 72.5,682.3 70.7,679.7 69.0,677.0 67.2,674.3 65.4,671.6 63.6,668.8 61.8,665.9 60.1,663.0 58.3,660.1 56.6,657.1 54.8,654.0 53.1,650.9 51.4,647.8 49.6,644.5 47.9,641.3 46.2,637.9 44.5,634.5 42.8,631.0 41.1,627.5 39.5,623.9 37.8,620.2 36.2,616.5 34.5,612.7 32.9,608.8 31.3,604.8 29.7,600.7 28.2,596.6 26.6,592.3 25.2,587.9 23.7,583.5 22.3,578.9 20.9,574.2 19.5,569.3 18.2,564.4 16.9,559.3 15.7,554.1 14.5,548.7 13.4,543.2 12.3,537.5 11.3,531.7 10.4,525.6 9.5,519.4 8.7,513.0 8.0,506.5 7.3,499.6 6.8,492.6 6.3,485.3 6.0,477.8 5.8,470.0 5.7,461.9 5.7,453.5 5.9,444.7 6.3,435.6 6.9,426.1 7.7,416.2 8.7,405.8 10.1,394.9 11.7,383.4 13.8,371.2 16.2,358.3 19.2,344.7 22.8,330.1 27.0,314.5 31.9,297.8 37.7,279.8 44.4,260.6 52.0,239.8 57.8,225.0" fill="none" stroke="#000090" stroke-width="1" shape-rendering="crispEdges"/><polyline points="190.8,749.0 187.6,746.0 184.4,742.9 181.2,739.8 179.4,738.1 177.5,736.3 175.7,734.5 173.8,732.7 171.9,730.9 170.1,729.0 168.2,727.2 166.3,725.3 164.4,723.3 162.5,721.4 160.6,719.3 158.7,717.3 156.8,715.2 154.9,713.1 153.0,711.0 151.1,708.8 149.2,706.5 147.3,704.3 145.4,702.0 143.5,699.6 141.6,697.3 139.7,694.9 137.8,692.4 135.8,690.0 133.9,687.4 132.0,684.9 130.0,682.3 128.1,679.7 126.1,677.0 124.2,674.3 122.2,671.6 120.3,668.8 118.3,665.9 116.4,663.0 114.5,660.1 112.5,657.1 110.6,654.0 108.7,650.9 106.7,647.8 104.8,644.5 102.9,641.3 101.0,637.9 99.1,634.5 97.2,631.0 95.3,627.5 93.4,623.9 91.5,620.2 89.6,616.5 87.7,612.7 85.9,608.8 84.0,604.8 82.2,600.7 80.4,596.6 78.6,592.3 76.8,587.9 75.1,583.5 73.4,578.9 71.8,574.2 70.1,569.3 68.5,564.4 67.0,559.3 65.5,554.1 64.0,548.7 62.6,543.2 61.2,537.5 59.9,531.7 58.7,525.6 57.5,519.4 56.3,513.0 55.3,506.5 54.3,499.6 53.4,492.6 52.6,485.3 51.9,477.8 51.3,470.0 50.9,461.9 50.6,453.5 50.4,444.7 50.4,435.6 50.5,426.1 50.9,416.2 51.5,405.8 52.4,394.9 53.7,383.4 55.2,371.2 57.3,358.3 59.7,344.7 62.8,330.1 66.5,314.5 70.9,297.8 76.2,279.8 82.3,260.6 89.3,239.8 97.5,217.4 106.8,193.2 117.4,167.0" fill="none" stroke="#000090" stroke-width="1" shape-rendering="crispEdges"/><polyline points="250.2,749.0 247.3,746.0 244.3,742.9 241.2,739.8 239.5,738.1 237.7,736.3 235.9,734.5 234.1,732.7 232.3,730.9 230.5,729.0 228.6,727.2 226.8,725.3 224.9,723.3 223.1,721.4 221.2,719.3 219.3,717.3 217.4,715.2 215.5,713.1 213.6,711.0 211.7,708.8 209.8,706.5 207.9,704.3 206.0,702.0 204.0,699.6 202.1,697.3 200.1,694.9 198.1,692.4 196.1,690.0 194.1,687.4 192.1,684.9 190.1,682.3 188.0,679.7 186.0,677.0 183.9,674.3 181.9,671.6 179.8,668.8 177.7,665.9 175.6,663.0 173.5,660.1 171.5,657.1 169.4,654.0 167.3,650.9 165.2,647.8 163.1,644.5 161.0,641.3 158.9,637.9 156.8,634.5 154.7,631.0 152.6,627.5 150.4,623.9 148.3,620.2 146.2,616.5 144.1,612.7 142.0,608.8 140.0,604.8 137.9,600.7 135.8,596.6 133.8,592.3 131.8,587.9 129.8,583.5 127.8,578.9 125.9,574.2 124.0,569.3 122.1,564.4 120.2,559.3 118.4,554.1 116.7,548.7 114.9,543.2 113.2,537.5 111.6,531.7 110.0,525.6 108.5,519.4 107.0,513.0 105.6,506.5 104.3,499.6 103.0,492.6 101.9,485.3 100.8,477.8 99.8,470.0 99.0,461.9 98.3,453.5 97.7,444.7 97.2,435.6 97.0,426.1 96.9,416.2 97.1,405.8 97.6,394.9 98.3,383.4 99.4,371.2 100.9,358.3 102.9,344.7 105.4,330.1 108.6,314.5 112.4,297.8 117.1,279.8 122.6,260.6 129.0,239.8 136.5,217.4 145.2,193.2 155.0,167.0 166.3,138.6 179.2,107.7" fill="none" stroke="#000090" stroke-width="1" shape-rendering="crispEdges"/><polyline points="308.8,749.0 306.4,746.0 303.8,742.9 301.2,739.8 299.7,738.1 298.2,736.3 296.7,734.5 295.1,732.7 293.5,730.9 291.9,729.0 290.3,727.2 288.7,725.3 287.0,723.3 285.3,721.4 283.7,719.3 282.0,717.3 280.3,715.2 278.6,713.1 276.8,711.0 275.1,708.8 273.3,706.5 271.6,704.3 269.8,702.0 267.9,699.6 266.1,697.3 264.2,694.9 262.4,692.4 260.5,690.0 258.5,687.4 256.6,684.9 254.6,682.3 252.6,679.7 250.6,677.0 248.5,674.3 246.5,671.6 244.4,668.8 242.3,665.9 240.2,663.0 238.1,660.1 236.0,657.1 233.8,654.0 231.6,650.9 229.5,647.8 227.3,644.5 225.1,641.3 222.8,637.9 220.6,634.5 218.4,631.0 216.1,627.5 213.8,623.9 211.6,620.2 209.3,616.5 207.0,612.7 204.7,608.8 202.4,604.8 200.1,600.7 197.8,596.6 195.5,592.3 193.3,587.9 191.0,583.5 188.8,578.9 186.6,574.2 184.4,569.3 182.2,564.4 180.0,559.3 177.9,554.1 175.8,548.7 173.8,543.2 171.7,537.5 169.7,531.7 167.8,525.6 165.9,519.4 164.1,513.0 162.3,506.5 160.6,499.6 158.9,492.6 157.3,485.3 155.8,477.8 154.5,470.0 153.2,461.9 152.0,453.5 150.9,444.7 150.0,435.6 149.3,426.1 148.8,416.2 148.4,405.8 148.4,394.9 148.6,383.4 149.1,371.2 150.1,358.3 151.5,344.7 153.4,330.1 156.0,314.5 159.2,297.8 163.2,279.8 168.0,260.6 173.8,239.8 180.5,217.4 188.4,193.2 197.5,167.0 207.9,138.6 219.9,107.7 233.5,74.1 243.6,50.0" fill="none" stroke="#000090" stroke-width="1" shape-rendering="crispEdges"/><polyline points="366.7,749.0 365.0,746.0 363.1,742.9 361.2,739.8 360.1,738.1 359.0,736.3 357.8,734.5 356.7,732.7 355.5,730.9 354.3,729.0 353.1,727.2 351.9,725.3 350.6,723.3 349.3,721.4 348.1,719.3 346.8,717.3 345.5,715.2 344.2,713.1 342.8,711.0 341.5,708.8 340.1,706.5 338.7,704.3 337.3,702.0 335.9,699.6 334.4,697.3 333.0,694.9 331.4,692.4 329.9,690.0 328.3,687.4 326.7,684.9 325.1,682.3 323.4,679.7 321.7,677.0 319.9,674.3 318.2,671.6 316.4,668.8 314.5,665.9 312.7,663.0 310.8,660.1 308.9,657.1 306.9,654.0 305.0,650.9 302.9,647.8 300.9,644.5 298.8,641.3 296.7,637.9 294.6,634.5 292.4,631.0 290.2,627.5 288.0,623.9 285.7,620.2 283.4,616.5 281.1,612.7 278.8,608.8 276.4,604.8 274.0,600.7 271.6,596.6 269.2,592.3 266.8,587.9 264.4,583.5 261.9,578.9 259.5,574.2 257.1,569.3 254.6,564.4 252.2,559.3 249.8,554.1 247.4,548.7 245.0,543.2 242.7,537.5 240.3,531.7 238.0,525.6 235.7,519.4 233.5,513.0 231.2,506.5 229.1,499.6 227.0,492.6 224.9,485.3 223.0,477.8 221.1,470.0 219.3,461.9 217.6,453.5 216.0,444.7 214.5,435.6 213.2,426.1 212.1,416.2 211.1,405.8 210.4,394.9 210.0,383.4 209.9,371.2 210.2,358.3 210.9,344.7 212.1,330.1 213.9,314.5 216.3,297.8 219.5,279.8 223.5,260.6 228.4,239.8 234.3,217.4 241.2,193.2 249.3,167.0 258.7,138.6 269.6,107.7 282.1,74.1 291.4,50.0" fill="none" stroke="#000090" stroke-width="1" shape-rendering="crispEdges"/><polyline points="424.4,749.0 423.4,746.0 422.3,742.9 421.2,739.8 420.6,738.1 419.9,736.3 419.2,734.5 418.5,732.7 417.8,730.9 417.1,729.0 416.4,727.2 415.7,725.3 414.9,723.3 414.2,721.4 413.5,719.3 412.7,717.3 412.0,715.2 411.2,713.1 410.4,711.0 409.7,708.8 408.9,706.5 408.1,704.3 407.3,702.0 406.4,699.6 405.6,697.3 404.7,694.9 403.8,692.4 402.9,690.0 402.0,687.4 401.0,684.9 400.0,682.3 399.0,679.7 398.0,677.0 396.9,674.3 395.8,671.6 394.7,668.8 393.5,665.9 392.4,663.0 391.1,660.1 389.9,657.1 388.6,654.0 387.3,650.9 386.0,647.8 384.6,644.5 383.1,641.3 381.7,637.9 380.1,634.5 378.6,631.0 377.0,627.5 375.3,623.9 373.6,620.2 371.8,616.5 370.0,612.7 368.2,608.8 366.3,604.8 364.3,600.7 362.3,596.6 360.2,592.3 358.1,587.9 356.0,583.5 353.8,578.9 351.6,574.2 349.3,569.3 347.0,564.4 344.7,559.3 342.3,554.1 339.9,548.7 337.5,543.2 335.0,537.5 332.5,531.7 330.0,525.6 327.5,519.4 324.9,513.0 322.4,506.5 319.9,499.6 317.4,492.6 314.9,485.3 312.4,477.8 310.0,470.0 307.6,461.9 305.3,453.5 303.1,444.7 301.0,435.6 299.0,426.1 297.1,416.2 295.4,405.8 293.9,394.9 292.6,383.4 291.7,371.2 291.0,358.3 290.8,344.7 291.0,330.1 291.8,314.5 293.3,297.8 295.4,279.8 298.3,260.6 302.0,239.8 306.6,217.4 312.3,193.2 319.1,167.0 327.1,138.6 336.5,107.7 347.5,74.1 355.7,50.0" fill="none" stroke="#000090" stroke-width="1" shape-rendering="crispEdges"/><polyline points="482.4,749.0 482.0,746.0 481.6,742.9 481.2,739.8 481.0,738.1 480.7,736.3 480.4,734.5 480.2,732.7 479.9,730.9 479.7,729.0 479.4,727.2 479.1,725.3 478.9,723.3 478.6,721.4 478.4,719.3 478.2,717.3 477.9,715.2 477.7,713.1 477.5,711.0 477.3,708.8 477.1,706.5 476.9,704.3 476.7,702.0 476.5,699.6 476.2,697.3 476.0,694.9 475.8,692.4 475.6,690.0 475.3,687.4 475.1,684.9 474.8,682.3 474.6,679.7 474.3,677.0 474.0,674.3 473.8,671.6 473.5,668.8 473.2,665.9 472.9,663.0 472.6,660.1 472.2,657.1 471.9,654.0 471.6,650.9 471.2,647.8 470.8,644.5 470.4,641.3 470.0,637.9 469.6,634.5 469.1,631.0 468.7,627.5 468.2,623.9 467.6,620.2 467.1,616.5 466.5,612.7 465.9,608.8 465.2,604.8 464.5,600.7 463.8,596.6 463.0,592.3 462.2,587.9 461.4,583.5 460.5,578.9 459.6,574.2 458.7,569.3 457.7,564.4 456.6,559.3 455.5,554.1 454.3,548.7 453.0,543.2 451.7,537.5 450.3,531.7 448.8,525.6 447.3,519.4 445.7,513.0 443.9,506.5 442.1,499.6 440.2,492.6 438.3,485.3 436.2,477.8 434.1,470.0 431.9,461.9 429.7,453.5 427.4,444.7 425.1,435.6 422.7,426.1 420.4,416.2 418.2,405.8 416.0,394.9 413.9,383.4 412.0,371.2 410.4,358.3 409.0,344.7 408.1,330.1 407.5,314.5 407.6,297.8 408.2,279.8 409.5,260.6 411.5,239.8 414.4,217.4 418.2,193.2 423.1,167.0 429.0,138.6 436.3,107.7 444.9,74.1 451.5,50.0" fill="none" stroke="#000090" stroke-width="1" shape-rendering="crispEdges"/><polyline points="540.9,749.0 541.0,746.0 541.1,742.9 541.2,739.8 541.3,738.1 541.3,736.3 541.4,734.5 541.4,732.7 541.5,730.9 541.6,729.0 541.6,727.2 541.7,725.3 541.8,723.3 541.9,721.4 542.1,719.3 542.2,717.3 542.4,715.2 542.6,713.1 542.7,711.0 543.0,708.8 543.2,706.5 543.4,704.3 543.7,702.0 543.9,699.6 544.2,697.3 544.4,694.9 544.7,692.4 545.0,690.0 545.3,687.4 545.6,684.9 545.9,682.3 546.2,679.7 546.5,677.0 546.9,674.3 547.2,671.6 547.5,668.8 547.9,665.9 548.3,663.0 548.7,660.1 549.1,657.1 549.5,654.0 549.9,650.9 550.4,647.8 550.8,644.5 551.3,641.3 551.7,637.9 552.2,634.5 552.7,631.0 553.2,627.5 553.7,623.9 554.3,620.2 554.8,616.5 555.3,612.7 555.9,608.8 556.5,604.8 557.0,600.7 557.7,596.6 558.3,592.3 558.9,587.9 559.6,583.5 560.2,578.9 560.9,574.2 561.7,569.3 562.4,564.4 563.2,559.3 563.9,554.1 564.7,548.7 565.5,543.2 566.4,537.5 567.2,531.7 568.0,525.6 568.9,519.4 569.8,513.0 570.6,506.5 571.5,499.6 572.3,492.6 573.2,485.3 574.1,477.8 574.9,470.0 575.7,461.9 576.5,453.5 577.3,444.7 578.0,435.6 578.6,426.1 579.3,416.2 579.9,405.8 580.4,394.9 580.9,383.4 581.4,371.2 581.8,358.3 582.2,344.7 582.6,330.1 583.1,314.5 583.7,297.8 584.4,279.8 585.3,260.6 586.5,239.8 588.0,217.4 589.9,193.2 592.4,167.0 595.7,138.6 599.8,107.7 604.9,74.1 609.0,50.0" fill="none" stroke="#000090" stroke-width="1" shape-rendering="crispEdges"/><polyline points="599.9,749.0 600.3,746.0 600.8,742.9 601.2,739.8 601.5,738.1 601.7,736.3 602.0,734.5 602.2,732.7 602.5,730.9 602.8,729.0 603.1,727.2 603.4,725.3 603.7,723.3 604.1,721.4 604.4,719.3 604.8,717.3 605.2,715.2 605.7,713.1 606.1,711.0 606.6,708.8 607.1,706.5 607.6,704.3 608.1,702.0 608.6,699.6 609.2,697.3 609.8,694.9 610.3,692.4 610.9,690.0 611.6,687.4 612.2,684.9 612.8,682.3 613.5,679.7 614.1,677.0 614.8,674.3 615.6,671.6 616.3,668.8 617.0,665.9 617.8,663.0 618.6,660.1 619.5,657.1 620.3,654.0 621.2,650.9 622.1,647.8 623.0,644.5 624.0,641.3 625.0,637.9 626.0,634.5 627.0,631.0 628.1,627.5 629.1,623.9 630.3,620.2 631.4,616.5 632.6,612.7 633.8,608.8 635.1,604.8 636.4,600.7 637.7,596.6 639.1,592.3 640.6,587.9 642.1,583.5 643.6,578.9 645.2,574.2 646.9,569.3 648.6,564.4 650.4,559.3 652.3,554.1 654.2,548.7 656.2,543.2 658.3,537.5 660.5,531.7 662.7,525.6 665.0,519.4 667.5,513.0 670.0,506.5 672.6,499.6 675.3,492.6 678.2,485.3 681.1,477.8 684.2,470.0 687.4,461.9 690.8,453.5 694.3,444.7 698.0,435.6 701.9,426.1 706.0,416.2 710.4,405.8 715.0,394.9 719.8,383.4 725.0,371.2 730.6,358.3 736.6,344.7 743.1,330.1 750.0,314.5 757.6,297.8 765.7,279.8 774.5,260.6 783.9,239.8 794.0,217.4 804.6,193.2 815.8,167.0 827.5,138.6 839.5,107.7 851.7,74.1 859.6,50.0" fill="none" stroke="#000090" stroke-width="1" shape-rendering="crispEdges"/><polyline points="659.3,749.0 659.9,746.0 660.6,742.9 661.2,739.8 661.6,738.1 661.9,736.3 662.3,734.5 662.7,732.7 663.1,730.9 663.5,729.0 663.9,727.2 664.4,725.3 664.8,723.3 665.3,721.4 665.8,719.3 666.3,717.3 666.8,715.2 667.4,713.1 668.0,711.0 668.6,708.8 669.3,706.5 669.9,704.3 670.6,702.0 671.3,699.6 672.0,697.3 672.7,694.9 673.5,692.4 674.2,690.0 675.0,687.4 675.8,684.9 676.6,682.3 677.5,679.7 678.3,677.0 679.2,674.3 680.1,671.6 681.1,668.8 682.0,665.9 683.0,663.0 684.0,660.1 685.1,657.1 686.2,654.0 687.3,650.9 688.4,647.8 689.6,644.5 690.8,641.3 692.0,637.9 693.3,634.5 694.6,631.0 695.9,627.5 697.3,623.9 698.7,620.2 700.1,616.5 701.6,612.7 703.2,608.8 704.8,604.8 706.4,600.7 708.1,596.6 709.8,592.3 711.7,587.9 713.5,583.5 715.5,578.9 717.5,574.2 719.6,569.3 721.8,564.4 724.0,559.3 726.4,554.1 728.8,548.7 731.3,543.2 733.9,537.5 736.6,531.7 739.5,525.6 742.4,519.4 745.5,513.0 748.6,506.5 752.0,499.6 755.4,492.6 759.0,485.3 762.8,477.8 766.8,470.0 770.9,461.9 775.2,453.5 779.8,444.7 784.6,435.6 789.7,426.1 795.0,416.2 800.7,405.8 806.7,394.9 813.1,383.4 820.0,371.2 827.4,358.3 835.4,344.7 844.1,330.1 853.5,314.5 863.7,297.8 874.9,279.8 887.0,260.6 900.2,239.8 914.7,217.4 930.4,193.2 947.5,167.0 966.1,138.6 986.4,107.7 1008.6,74.1 1024.5,50.0" fill="none" stroke="#000090" stroke-width="1" shape-rendering="crispEdges"/><line x1="-848" y1="749" x2="-149" y2="50" stroke="#ffffff" shape-rendering="crispEdges"/><line x1="-788" y1="749" x2="-89" y2="50" stroke="#ffffff" shape-rendering="crispEdges"/><line x1="-728" y1="749" x2="-29" y2="50" stroke="#ffffff" shape-rendering="crispEdges"/><line x1="-668" y1="749" x2="31" y2="50" stroke="#ffffff" shape-rendering="crispEdges"/><line x1="-608" y1="749" x2="91" y2="50" stroke="#ffffff" shape-rendering="crispEdges"/><line x1="-548" y1="749" x2="151" y2="50" stroke="#ffffff" shape-rendering="crispEdges"/><line x1="-488" y1="749" x2="211" y2="50" stroke="#ffffff" shape-rendering="crispEdges"/><line x1="-428" y1="749" x2="271" y2="50" stroke="#ffffff" shape-rendering="crispEdges"/><line x1="-368" y1="749" x2="331" y2="50" stroke="#ffffff" shape-rendering="crispEdges"/><line x1="-308" y1="749" x2="391" y2="50" stroke="#ffffff" shape-rendering="crispEdges"/><line x1="-248" y1="749" x2="451" y2="50" stroke="#ffffff" shape-rendering="crispEdges"/><line x1="-188" y1="749" x2="511" y2="50" stroke="#ffffff" shape-rendering="crispEdges"/><line x1="-128" y1="749" x2="571" y2="50" stroke="#ffffff" shape-rendering="crispEdges"/><line x1="-68" y1="749" x2="631" y2="50" stroke="#ffffff" shape-rendering="crispEdges"/><line x1="-8" y1="749" x2="691" y2="50" stroke="#ffffff" shape-rendering="crispEdges"/><line x1="52" y1="749" x2="751" y2="50" stroke="#ffffff" shape-rendering="crispEdges"/><line x1="112" y1="749" x2="811" y2="50" stroke="#ffffff" shape-rendering="crispEdges"/><line x1="172" y1="749" x2="871" y2="50" stroke="#ffffff" shape-rendering="crispEdges"/><line x1="232" y1="749" x2="931" y2="50" stroke="#ffffff" shape-rendering="crispEdges"/><line x1="292" y1="749" x2="991" y2="50" stroke="#ffffff" shape-rendering="crispEdges"/><line x1="352" y1="749" x2="1051" y2="50" stroke="#ffffff" shape-rendering="crispEdges"/><line x1="412" y1="749" x2="1111" y2="50" stroke="#ffffff" shape-rendering="crispEdges"/><line x1="472" y1="749" x2="1171" y2="50" stroke="#ffffff" shape-rendering="crispEdges"/><line x1="532" y1="749" x2="1231" y2="50" stroke="#ffffff" shape-rendering="crispEdges"/><line x1="592" y1="749" x2="1291" y2="50" stroke="#ffffff" shape-rendering="crispEdges"/><line x1="652" y1="749" x2="1351" y2="50" stroke="#ffffff" shape-rendering="crispEdges"/></g><line x1="56" y1="50.5" x2="666" y2="50.5" stroke="#fff" shape-rendering="crispEdges"/><line x1="56" y1="321.5" x2="666" y2="321.5" stroke="#fff" shape-rendering="crispEdges"/><line x1="56" y1="449.5" x2="666" y2="449.5" stroke="#fff" shape-rendering="crispEdges"/><line x1="56" y1="529.5" x2="666" y2="529.5" stroke="#fff" shape-rendering="crispEdges"/><line x1="56" y1="586.5" x2="666" y2="586.5" stroke="#fff" shape-rendering="crispEdges"/><line x1="56" y1="630.5" x2="666" y2="630.5" stroke="#fff" shape-rendering="crispEdges"/><line x1="56" y1="665.5" x2="666" y2="665.5" stroke="#fff" shape-rendering="crispEdges"/><line x1="56" y1="694.5" x2="666" y2="694.5" stroke="#fff" shape-rendering="crispEdges"/><line x1="56" y1="719.5" x2="666" y2="719.5" stroke="#fff" shape-rendering="crispEdges"/><line x1="56" y1="740.5" x2="666" y2="740.5" stroke="#fff" shape-rendering="crispEdges"/><rect x="61.5" y="50.5" width="600" height="699" fill="none" stroke="#fff" shape-rendering="crispEdges"/><g clip-path="url(#pc)"><polyline points="469.4,51.0 463.0,69.0 455.0,97.0 448.0,125.0 440.0,157.0 436.0,185.0 431.0,211.0 428.8,233.0 427.0,272.0 427.8,321.0 431.1,356.3 435.4,388.0 440.5,409.5 447.9,447.7 453.0,468.4 458.2,489.0 460.8,510.0 464.9,529.7 472.4,567.9 475.3,591.0 478.8,618.9 480.3,640.0 482.9,674.7 483.4,684.2 486.6,687.4 549.7,731.6" fill="none" stroke="#ffb0ff" stroke-width="1" shape-rendering="crispEdges"/><polyline points="456.0,51.0 445.0,85.0 434.0,129.0 425.0,165.0 419.0,205.0 415.8,232.0 413.5,272.0 413.8,321.0 416.8,347.8 421.2,381.0 425.0,409.5 433.9,441.9 440.5,474.3 449.8,512.0 453.9,529.7 461.4,562.1 464.5,584.1 467.5,600.0 469.5,618.9 472.2,631.0 475.1,669.0 478.0,695.7 500.0,711.0 530.8,732.6" fill="none" stroke="#ff00ff" stroke-width="1" shape-rendering="crispEdges"/><polyline points="459.6,731.0 478.0,695.7" fill="none" stroke="#ff00ff" stroke-width="1" shape-rendering="crispEdges"/><path d="M280,732.5h5M282.5,730v5M257,731.5h5M259.5,729v5M246,730.5h5M248.5,728v5M235,730.5h5M237.5,728v5M226,729.5h5M228.5,727v5M173,719.5h5M175.5,717v5M136,713.5h5M138.5,711v5M110,709.5h5M112.5,707v5M80,707.5h5M82.5,705v5M75,701.5h5M77.5,699v5M70,697.5h5M72.5,695v5M64,693.5h5M66.5,691v5" stroke="#fff" fill="none" shape-rendering="crispEdges"/><path d="M70,732.5h5M72.5,730v5M86,732.5h5M88.5,730v5M103,731.5h5M105.5,729v5M113,731.5h5M115.5,729v5M121,731.5h5M123.5,729v5M126,730.5h5M128.5,728v5M130,727.5h5M132.5,725v5M134,724.5h5M136.5,722v5M152,714.5h5M154.5,712v5M173,708.5h5M175.5,706v5M151,701.5h5M153.5,699v5M178,693.5h5M180.5,691v5" stroke="#fff" fill="none" shape-rendering="crispEdges"/><polyline points="72.1,732.5 88.4,732.5 105.5,731.2 115.6,731.2 123.5,731.2 128.8,730.3 132.3,727.7 136.7,724.2 154.0,714.3 175.0,708.1 153.0,701.4 180.3,693.6 62.0,682.5" fill="none" stroke="#e07010" stroke-width="1" shape-rendering="crispEdges"/><polyline points="282.0,732.0 259.0,731.5 248.4,730.9 237.8,730.2 228.5,729.6 175.0,719.8 138.5,713.7 112.5,709.3 82.2,707.5 77.0,701.4 72.6,697.8 66.4,693.9 62.0,683.8" fill="none" stroke="#ffff00" stroke-width="1" shape-rendering="crispEdges"/><polyline points="62.5,653.0 62.5,646.5 67.0,646.5" fill="none" stroke="#e07010" stroke-width="1" shape-rendering="crispEdges"/><rect x="61" y="648" width="3" height="5" fill="#ffff00"/><path d="M275,732.5h5M277.5,730v5M258,727.5h5M260.5,725v5M268,725.5h5M270.5,723v5M252,718.5h5M254.5,716v5M311,713.5h5M313.5,711v5M323,707.5h5M325.5,705v5M326,701.5h5M328.5,699v5M322,697.5h5M324.5,695v5M292,694.5h5M294.5,692v5M298,683.5h5M300.5,681v5M297,676.5h5M299.5,674v5M291,673.5h5M293.5,671v5M312,662.5h5M314.5,660v5M308,656.5h5M310.5,654v5" stroke="#fff" fill="none" shape-rendering="crispEdges"/><polyline points="211.0,732.0 277.0,732.0 260.9,727.0 270.8,725.9 254.6,718.4 313.1,713.4 325.6,707.8 328.7,701.0 324.3,697.2 294.5,694.0 300.4,683.3 299.4,676.0 293.2,673.0 314.4,662.4 310.2,656.4" fill="none" stroke="#c8c000" stroke-width="1" shape-rendering="crispEdges"/><rect x="323" y="705" width="7" height="7" fill="#c8c000"/><text x="326.5" y="711.2" font-size="8" fill="#000" text-anchor="middle">1</text><rect x="297" y="680" width="7" height="7" fill="#c8c000"/><text x="300.5" y="686.2" font-size="8" fill="#000" text-anchor="middle">2</text><rect x="307" y="653" width="7" height="7" fill="#c8c000"/><text x="310.5" y="659.2" font-size="8" fill="#000" text-anchor="middle">3</text><path d="M96,50.5h5M98.5,48v5M158,80.5h5M160.5,78v5M151,88.5h5M153.5,86v5M135,110.5h5M137.5,108v5M140,125.5h5M142.5,123v5M158,149.5h5M160.5,147v5M188,177.5h5M190.5,175v5M200,183.5h5M202.5,181v5M194,185.5h5M196.5,183v5M152,207.5h5M154.5,205v5M189,218.5h5M191.5,216v5M201,222.5h5M203.5,220v5M201,230.5h5M203.5,228v5M212,268.5h5M214.5,266v5M218,283.5h5M220.5,281v5M219,303.5h5M221.5,301v5M205,321.5h5M207.5,319v5M195,336.5h5M197.5,334v5M185,348.5h5M187.5,346v5M176,363.5h5M178.5,361v5M175,381.5h5M177.5,379v5M172,389.5h5M174.5,387v5M174,394.5h5M176.5,392v5M126,412.5h5M128.5,410v5M118,415.5h5M120.5,413v5M135,425.5h5M137.5,423v5M142,426.5h5M144.5,424v5M189,449.5h5M191.5,447v5M189,453.5h5M191.5,451v5M183,454.5h5M185.5,452v5M156,464.5h5M158.5,462v5M135,473.5h5M137.5,471v5M124,484.5h5M126.5,482v5M113,495.5h5M115.5,493v5M108,503.5h5M110.5,501v5M103,509.5h5M105.5,507v5M99,514.5h5M101.5,512v5M89,529.5h5M91.5,527v5M97,535.5h5M99.5,533v5M105,540.5h5M107.5,538v5M112,544.5h5M114.5,542v5M101,558.5h5M103.5,556v5M105,560.5h5M107.5,558v5M106,566.5h5M108.5,564v5M95,576.5h5M97.5,574v5M96,583.5h5M98.5,581v5M99,586.5h5M101.5,584v5M105,590.5h5M107.5,588v5M110,594.5h5M112.5,592v5M117,599.5h5M119.5,597v5M118,601.5h5M120.5,599v5M140,615.5h5M142.5,613v5M139,616.5h5M141.5,614v5M80,631.5h5M82.5,629v5M96,636.5h5M98.5,634v5M78,647.5h5M80.5,645v5M73,651.5h5M75.5,649v5M70,654.5h5M72.5,652v5M76,655.5h5M78.5,653v5M92,661.5h5M94.5,659v5M84,663.5h5M86.5,661v5M107,668.5h5M109.5,666v5M123,673.5h5M125.5,671v5M141,677.5h5M143.5,675v5M168,682.5h5M170.5,680v5M226,694.5h5M228.5,692v5M252,697.5h5M254.5,695v5M153,713.5h5M155.5,711v5M187,716.5h5M189.5,714v5M196,716.5h5M198.5,714v5M132,725.5h5M134.5,723v5M160,729.5h5M162.5,727v5M136,730.5h5M138.5,728v5M174,731.5h5M176.5,729v5" stroke="#fff" fill="none" shape-rendering="crispEdges"/><polyline points="98.0,50.0 160.4,80.4 153.7,88.6 137.5,110.9 142.7,125.8 160.6,149.6 190.3,177.6 202.3,183.0 196.3,185.8 154.5,207.4 191.3,218.5 203.4,222.9 203.4,230.5 214.8,268.4 220.0,283.7 221.6,303.4 207.4,321.8 197.6,336.0 187.3,348.7 178.5,363.7 177.8,381.5 174.2,389.7 176.6,394.0 128.4,412.6 120.5,415.5 137.9,425.0 144.7,426.5 191.4,449.5 191.4,453.0 185.7,454.5 158.6,464.8 137.3,473.6 126.5,484.2 115.5,495.7 110.4,503.2 105.7,509.2 101.3,514.2 91.8,529.2 99.4,535.8 107.6,540.0 114.7,544.5 103.8,558.4 107.1,560.4 108.4,566.2 97.6,576.5 98.3,583.9 101.2,586.6 107.1,590.4 112.2,594.8 119.1,599.3 120.4,601.8 142.9,615.0 141.0,616.5 82.4,631.2 98.8,636.0 80.0,647.0 75.0,651.0 72.4,654.8 78.7,655.5 94.5,661.2 86.3,663.2 109.0,668.7 125.7,673.0 143.6,677.6 170.8,682.3 228.5,694.8 254.6,697.2 155.7,713.4 189.0,716.0 198.6,716.5 134.6,725.7 162.7,729.6 138.0,730.5 176.0,731.8" fill="none" stroke="#ff0080" stroke-width="1" shape-rendering="crispEdges"/><path d="M233,50.5h5M235.5,48v5M305,80.5h5M307.5,78v5M293,88.5h5M295.5,86v5M257,111.5h5M259.5,109v5M275,125.5h5M277.5,123v5M305,149.5h5M307.5,147v5M341,176.5h5M343.5,174v5M353,183.5h5M355.5,181v5M347,185.5h5M349.5,183v5M305,207.5h5M307.5,205v5M341,218.5h5M343.5,216v5M353,223.5h5M355.5,221v5M353,230.5h5M355.5,228v5M364,268.5h5M366.5,266v5M371,284.5h5M373.5,282v5M371,303.5h5M373.5,301v5M353,321.5h5M355.5,319v5M341,335.5h5M343.5,333v5M329,348.5h5M331.5,346v5M317,363.5h5M319.5,361v5M311,381.5h5M313.5,379v5M305,390.5h5M307.5,388v5M305,394.5h5M307.5,392v5M275,412.5h5M277.5,410v5M270,415.5h5M272.5,413v5M286,425.5h5M288.5,423v5M293,426.5h5M295.5,424v5M342,449.5h5M344.5,447v5M342,452.5h5M344.5,450v5M335,454.5h5M337.5,452v5M305,463.5h5M307.5,461v5M281,473.5h5M283.5,471v5M269,484.5h5M271.5,482v5M257,495.5h5M259.5,493v5M251,503.5h5M253.5,501v5M245,509.5h5M247.5,507v5M239,514.5h5M241.5,512v5M221,529.5h5M223.5,527v5M215,535.5h5M217.5,533v5M215,539.5h5M217.5,537v5M209,544.5h5M211.5,542v5M245,558.5h5M247.5,556v5M252,561.5h5M254.5,559v5M257,565.5h5M259.5,563v5M233,576.5h5M235.5,574v5M221,583.5h5M223.5,581v5M210,586.5h5M212.5,584v5M215,590.5h5M217.5,588v5M215,595.5h5M217.5,593v5M215,598.5h5M217.5,596v5M215,601.5h5M217.5,599v5M215,602.5h5M217.5,600v5M221,613.5h5M223.5,611v5M221,616.5h5M223.5,614v5M233,631.5h5M235.5,629v5M233,639.5h5M235.5,637v5M252,647.5h5M254.5,645v5M257,650.5h5M259.5,648v5M221,653.5h5M223.5,651v5M196,655.5h5M198.5,653v5M246,661.5h5M248.5,659v5M233,663.5h5M235.5,661v5M209,672.5h5M211.5,670v5M234,682.5h5M236.5,680v5M252,689.5h5M254.5,687v5M263,693.5h5M265.5,691v5M293,697.5h5M295.5,695v5M276,701.5h5M278.5,699v5M221,713.5h5M223.5,711v5M195,717.5h5M197.5,715v5M185,718.5h5M187.5,716v5M195,724.5h5M197.5,722v5M185,726.5h5M187.5,724v5M197,729.5h5M199.5,727v5M167,731.5h5M169.5,729v5M131,732.5h5M133.5,730v5" stroke="#fff" fill="none" shape-rendering="crispEdges"/><polyline points="235.8,50.0 307.2,80.5 295.8,88.4 259.5,111.3 277.6,125.5 307.3,149.2 343.6,176.8 355.0,183.2 349.2,185.8 307.2,207.2 343.6,218.2 355.5,223.0 355.5,230.5 366.8,268.4 373.6,284.2 373.6,303.2 355.5,321.6 343.5,335.8 331.3,348.4 319.5,363.4 313.2,381.6 307.6,390.3 307.6,394.5 277.6,412.4 272.1,415.2 288.7,425.0 295.8,426.1 344.0,449.2 344.0,452.6 337.6,454.5 307.6,463.7 283.5,473.2 271.3,484.5 259.5,495.3 253.6,503.5 247.6,509.2 241.8,514.2 223.6,529.7 217.6,535.0 217.2,539.5 211.6,544.2 247.6,558.4 254.0,561.3 259.2,565.5 235.3,576.3 223.6,583.2 212.9,586.8 217.5,590.0 217.5,595.5 217.5,598.2 217.5,601.0 217.5,602.6 223.5,613.6 223.5,616.4 235.0,631.2 235.0,639.4 254.2,647.1 259.7,650.2 223.5,653.7 198.8,655.6 248.2,661.4 235.0,663.0 211.4,672.9 236.1,682.8 254.8,689.4 265.8,693.5 295.7,697.2 278.3,701.0 223.5,713.4 197.4,717.2 187.3,718.2 197.9,724.8 187.3,726.6 199.9,729.0 169.8,731.0 133.7,732.5" fill="none" stroke="#00ff00" stroke-width="1" shape-rendering="crispEdges"/><path d="M392,284.5h5M394.5,282v5M381,302.5h5M383.5,300v5M378,321.5h5M380.5,319v5M372,336.5h5M374.5,334v5M366,348.5h5M368.5,346v5M353,363.5h5M355.5,361v5M353,381.5h5M355.5,379v5M344,390.5h5M346.5,388v5M342,394.5h5M344.5,392v5M320,412.5h5M322.5,410v5M335,415.5h5M337.5,413v5M377,425.5h5M379.5,423v5M378,426.5h5M380.5,424v5M357,449.5h5M359.5,447v5M346,452.5h5M348.5,450v5M343,454.5h5M345.5,452v5M392,464.5h5M394.5,462v5M392,473.5h5M394.5,471v5M392,484.5h5M394.5,482v5M375,495.5h5M377.5,493v5M424,503.5h5M426.5,501v5M412,509.5h5M414.5,507v5M368,513.5h5M370.5,511v5M333,515.5h5M335.5,513v5M304,529.5h5M306.5,527v5M288,530.5h5M290.5,528v5M377,536.5h5M379.5,534v5M403,539.5h5M405.5,537v5M392,545.5h5M394.5,543v5M361,560.5h5M363.5,558v5M352,566.5h5M354.5,564v5M335,576.5h5M337.5,574v5M384,583.5h5M386.5,581v5M350,586.5h5M352.5,584v5M295,590.5h5M297.5,588v5M389,595.5h5M391.5,593v5M342,598.5h5M344.5,596v5M353,601.5h5M355.5,599v5M387,613.5h5M389.5,611v5M382,616.5h5M384.5,614v5M358,631.5h5M360.5,629v5M424,638.5h5M426.5,636v5M431,639.5h5M433.5,637v5M448,647.5h5M450.5,645v5M448,650.5h5M450.5,648v5M368,653.5h5M370.5,651v5M349,654.5h5M351.5,652v5M346,655.5h5M348.5,653v5M337,655.5h5M339.5,653v5M407,658.5h5M409.5,656v5M419,662.5h5M421.5,660v5M368,672.5h5M370.5,670v5M384,677.5h5M386.5,675v5M390,682.5h5M392.5,680v5M449,693.5h5M451.5,691v5M449,697.5h5M451.5,695v5M447,701.5h5M449.5,699v5M450,707.5h5M452.5,705v5M456,711.5h5M458.5,709v5M457,714.5h5M459.5,712v5M457,718.5h5M459.5,716v5M456,725.5h5M458.5,723v5M457,729.5h5M459.5,727v5M459,731.5h5M461.5,729v5" stroke="#fff" fill="none" shape-rendering="crispEdges"/><polyline points="394.0,284.5 383.1,302.4 380.7,321.6 374.3,336.3 368.1,348.9 355.0,363.9 355.5,381.6 346.3,390.3 344.7,394.5 322.6,412.4 337.2,415.2 379.2,425.0 380.0,426.5 359.7,449.5 348.7,452.6 345.5,454.2 394.7,464.2 394.7,473.4 394.7,484.7 377.4,495.5 426.5,503.4 414.7,509.6 370.3,513.5 335.2,515.5 306.6,529.0 290.2,530.0 379.0,536.0 405.8,539.5 394.7,545.0 363.2,560.5 354.8,566.4 337.3,576.1 386.0,583.3 352.5,586.4 297.0,590.5 391.6,595.3 344.3,598.4 355.0,601.0 389.7,613.6 384.0,616.7 360.7,631.2 426.5,638.6 433.9,639.5 450.8,647.1 450.8,650.8 370.8,653.3 351.2,654.6 348.7,655.2 339.9,655.6 409.3,658.4 421.3,662.8 370.0,672.6 386.4,677.6 392.5,682.0 451.2,693.5 451.2,697.3 449.0,701.5 452.9,707.2 458.9,711.6 459.5,714.0 459.5,718.0 458.9,725.9 459.6,729.6 461.9,731.1" fill="none" stroke="#00ffff" stroke-width="1" shape-rendering="crispEdges"/><path d="M654,88.5h5M656.5,86v5M626,111.5h5M628.5,109v5M609,125.5h5M611.5,123v5M585,149.5h5M587.5,147v5M571,177.5h5M573.5,175v5M563,183.5h5M565.5,181v5M561,185.5h5M563.5,183v5M548,207.5h5M550.5,205v5M541,218.5h5M543.5,216v5M537,223.5h5M539.5,221v5M531,230.5h5M533.5,228v5M516,268.5h5M518.5,266v5M505,284.5h5M507.5,282v5M488,303.5h5M490.5,301v5M480,320.5h5M482.5,318v5M474,336.5h5M476.5,334v5M462,348.5h5M464.5,346v5M437,363.5h5M439.5,361v5M431,381.5h5M433.5,379v5M422,390.5h5M424.5,388v5M420,394.5h5M422.5,392v5M416,412.5h5M418.5,410v5M416,415.5h5M418.5,413v5M412,425.5h5M414.5,423v5M415,426.5h5M417.5,424v5M416,449.5h5M418.5,447v5M416,453.5h5M418.5,451v5M416,454.5h5M418.5,452v5M417,464.5h5M419.5,462v5M418,473.5h5M420.5,471v5M419,484.5h5M421.5,482v5M423,494.5h5M425.5,492v5M425,503.5h5M427.5,501v5M428,509.5h5M430.5,507v5M428,514.5h5M430.5,512v5M431,530.5h5M433.5,528v5M431,534.5h5M433.5,532v5M431,539.5h5M433.5,537v5M433,544.5h5M435.5,542v5M445,559.5h5M447.5,557v5M445,565.5h5M447.5,563v5M443,576.5h5M445.5,574v5M444,584.5h5M446.5,582v5M445,590.5h5M447.5,588v5M443,595.5h5M445.5,593v5M443,600.5h5M445.5,598v5M447,614.5h5M449.5,612v5M447,616.5h5M449.5,614v5M454,630.5h5M456.5,628v5M455,639.5h5M457.5,637v5M463,647.5h5M465.5,645v5M468,654.5h5M470.5,652v5M468,659.5h5M470.5,657v5M468,661.5h5M470.5,659v5M472,665.5h5M474.5,663v5M475,672.5h5M477.5,670v5M475,677.5h5M477.5,675v5M481,683.5h5M483.5,681v5M484,693.5h5M486.5,691v5M489,697.5h5M491.5,695v5M495,701.5h5M497.5,699v5M498,707.5h5M500.5,705v5M506,716.5h5M508.5,714v5M518,725.5h5M520.5,723v5M526,731.5h5M528.5,729v5M539,732.5h5M541.5,730v5" stroke="#fff" fill="none" shape-rendering="crispEdges"/><polyline points="701.0,50.0 656.3,88.2 628.7,111.4 611.1,125.9 587.4,149.6 573.5,177.5 565.1,183.7 563.1,185.3 550.3,207.4 543.6,218.0 539.2,223.0 533.0,230.0 518.5,268.2 507.9,284.4 490.6,303.1 482.2,320.9 476.6,336.4 464.5,348.7 439.1,363.8 433.8,381.2 424.3,390.3 422.8,394.3 418.4,412.4 418.4,415.3 414.7,425.7 417.5,426.5 418.9,449.5 418.9,453.6 418.9,454.5 419.1,464.4 420.3,473.1 421.4,484.6 425.0,494.9 427.2,503.4 430.2,509.6 430.9,514.0 433.6,530.3 433.0,534.9 433.0,539.5 435.9,544.8 447.5,559.8 447.5,565.6 445.8,576.6 446.3,584.1 447.5,590.5 445.8,595.7 445.8,600.3 449.8,614.3 449.8,616.5 456.0,630.9 457.4,639.0 465.5,647.1 470.7,654.5 470.0,659.6 470.7,661.9 474.0,665.8 477.1,672.6 477.6,677.4 483.4,683.2 486.6,693.7 491.8,697.4 497.1,701.0 500.3,707.4 508.7,716.8 520.3,725.3 528.7,731.6 541.3,732.1" fill="none" stroke="#ff0000" stroke-width="1" shape-rendering="crispEdges"/></g><rect x="61" y="695" width="564" height="1" fill="#ff00ff"/><rect x="625.5" y="686.5" width="30" height="17" fill="#000" stroke="#ff00ff" shape-rendering="crispEdges"/><text x="640.5" y="700" fill="#ff00ff" font-size="13" text-anchor="middle" >LCL</text><rect x="67.5" y="607.5" width="43" height="17" fill="#000" stroke="#ffff00" shape-rendering="crispEdges"/><text x="89" y="621" fill="#ffff00" font-size="12.5" text-anchor="middle" >CAPE</text><rect x="67.5" y="636.5" width="57" height="17" fill="#000" stroke="#e07010" shape-rendering="crispEdges"/><text x="96" y="650" fill="#e07010" font-size="12.5" text-anchor="middle" >CINH * 5</text><text x="761" y="32" fill="#00ff00" font-size="13" text-anchor="middle" font-weight="bold" >OBS</text><text x="826" y="32" fill="#ff0080" font-size="13" text-anchor="middle" font-weight="bold" >SR</text><line x1="761.5" y1="40" x2="761.5" y2="770" stroke="#00ff00" shape-rendering="crispEdges"/><line x1="826.5" y1="40" x2="826.5" y2="770" stroke="#ff0080" shape-rendering="crispEdges"/><path d="M761.5,80.2L732.0,85.6M761.5,88.4L733.2,95.7M761.5,111.4L734.0,121.6M761.5,125.4L733.0,133.5M761.5,149.4L732.0,154.4M761.5,177.6L732.0,178.5M761.5,183.3L732.0,183.3M761.5,185.4L732.0,185.4M761.5,207.6L732.0,207.6M761.5,218.7L732.0,215.1M761.5,223.5L732.0,220.6M761.5,230.5L732.0,228.6M761.5,268.8L732.0,269.8M761.5,284.4L732.0,286.6M761.5,303.3L732.0,306.4M761.5,304.3L732.0,307.4M761.5,321.7L732.0,326.4M761.5,336.6L733.0,342.4M761.5,348.5L733.0,355.2M761.5,364.3L733.0,372.2M761.5,365.3L733.0,373.2M761.5,382.1L733.0,390.8M761.5,390.8L734.0,399.6M761.5,394.6L734.0,404.4M761.5,412.0L732.0,417.0M761.5,415.5L732.0,418.6M761.5,425.7L732.0,429.6M761.5,426.5L732.0,430.5M761.5,449.6L732.0,453.5M761.5,453.7L732.0,458.6M761.5,454.5L732.0,459.5M761.5,464.5L732.0,468.7M761.5,473.6L732.0,478.6M761.5,484.5L732.0,489.5M761.5,495.5L732.0,500.5M761.5,503.4L732.0,508.3M761.5,509.0L732.0,514.0M761.5,514.2L732.0,519.8M761.5,516.0L732.0,521.0M761.5,529.5L732.0,534.5M761.5,535.5L732.0,542.0M761.5,539.5L732.0,546.0M761.5,544.2L734.0,554.5M761.5,558.4L732.0,564.0M761.5,561.0L732.0,566.0M761.5,565.5L732.0,569.5M761.5,576.5L732.0,581.0M761.5,583.5L733.0,590.5M761.5,587.0L733.0,595.0M761.5,590.0L733.0,598.0M761.5,595.5L734.0,604.0M761.5,598.3L734.0,607.0M761.5,601.5L734.0,612.0M761.5,613.5L736.0,628.0M761.5,616.5L736.0,632.0M761.5,631.0L732.0,631.0M761.5,637.0L732.0,632.0M761.5,646.5L732.0,643.5M761.5,650.5L732.0,650.5M761.5,653.7L732.0,653.0M761.5,655.6L732.0,656.0M761.5,658.0L732.0,658.0M761.5,661.4L732.0,661.0M761.5,663.0L732.0,664.0M761.5,665.0L732.0,668.5M761.5,672.5L735.0,686.0M761.5,674.0L735.0,688.0M761.5,678.0L736.0,691.5M761.5,682.5L738.0,699.0M761.5,689.4L742.0,712.0M761.5,693.5L744.0,716.0M761.5,695.0L742.0,718.0M761.5,697.2L741.0,720.0M761.5,701.0L739.0,725.0M761.5,705.0L740.0,728.0M761.5,713.4L737.0,740.0M761.5,717.2L738.0,743.0M761.5,721.0L739.0,745.0M761.5,725.9L740.0,748.0M761.5,729.0L742.0,751.0M761.5,731.5L743.0,752.0M826.5,80.2L800.2,93.6M826.5,88.4L802.3,104.6M826.5,111.2L813.4,137.7M826.5,125.3L807.1,146.9M826.5,149.4L800.2,162.6M826.5,177.6L797.0,179.5M826.5,183.3L797.0,183.7M826.5,185.4L797.0,185.4M826.5,207.6L797.0,207.6M826.5,218.7L797.0,212.0M826.5,223.5L797.0,218.5M826.5,230.5L797.0,226.6M826.5,268.8L797.0,269.8M826.5,284.4L797.0,287.7M826.5,303.3L797.0,308.5M826.5,304.3L797.0,309.5M826.5,321.7L799.0,332.6M826.5,336.6L802.0,348.8M826.5,348.5L801.0,362.7M826.5,364.3L802.0,380.2M826.5,365.3L802.0,381.2M826.5,382.1L805.0,400.7M826.5,390.8L806.0,410.5M826.5,394.6L809.0,415.8M826.5,412.0L799.0,424.4M826.5,415.5L799.0,424.4M826.5,425.7L798.0,433.8M826.5,426.7L798.0,434.8M826.5,449.6L798.0,455.3M826.5,453.7L798.0,460.4M826.5,454.7L798.0,461.4M826.5,464.5L799.0,475.5M826.5,473.6L801.0,487.9M826.5,484.5L802.0,500.8M826.5,495.5L804.0,513.5M826.5,503.4L805.0,516.0M826.5,509.0L805.0,522.0M826.5,514.2L808.0,527.0M826.5,516.0L809.0,531.0M826.5,529.5L820.0,557.5M826.5,539.5L833.0,571.0M826.5,559.0L800.0,577.0M826.5,561.0L801.0,578.0M826.5,565.5L804.0,580.0M826.5,576.5L812.0,601.0M826.5,583.5L822.0,612.0M826.5,590.0L832.0,612.0M826.5,595.0L828.0,624.0M826.5,601.0L830.0,630.0M826.5,613.5L816.0,640.0M826.5,616.5L820.0,644.0M826.5,631.0L831.0,645.0M826.5,646.0L799.5,634.5M826.5,650.0L797.0,650.0M826.5,652.0L797.0,654.0M826.5,660.0L797.0,660.0M826.5,661.0L797.0,661.0M826.5,663.0L797.0,663.0M826.5,655.8L802.0,674.0M826.5,664.6L803.0,682.0M826.5,665.0L819.0,682.0M826.5,656.5L849.5,673.5M826.5,659.5L843.6,678.6M826.5,672.7L834.0,701.5M826.5,680.0L831.0,708.0M826.5,689.0L830.0,716.0M826.5,697.0L829.0,718.0M826.5,701.0L831.0,720.0M826.5,705.0L833.0,728.0M826.5,713.0L838.0,742.0M826.5,717.0L842.0,744.0M826.5,721.0L852.5,745.0M826.5,725.0L850.0,748.0M826.5,729.0L848.0,752.0M826.5,731.0L845.0,754.0" stroke="#fff" fill="none" shape-rendering="crispEdges"/><text x="62.4" y="28.8" fill="#fff" font-size="16.3" font-weight="bold" textLength="229" lengthAdjust="spacing">Station: 06610 LSMP Payerne</text><text x="317.4" y="28.8" fill="#fff" font-size="16.3" font-weight="bold" textLength="133" lengthAdjust="spacing">Date: 30 Jul 2016</text><text x="473.8" y="28.8" fill="#fff" font-size="16.3" font-weight="bold" textLength="89.6" lengthAdjust="spacing">Time: 1200Z</text><text x="53" y="54.5" fill="#fff" font-size="12" text-anchor="end" >100</text><text x="670.3" y="54.5" fill="#fff" font-size="12" letter-spacing="0.3">16620m</text><text x="53" y="325.5" fill="#fff" font-size="12" text-anchor="end" >200</text><text x="670.3" y="325.5" fill="#fff" font-size="12" letter-spacing="0.3">12230m</text><text x="53" y="453.5" fill="#fff" font-size="12" text-anchor="end" >300</text><text x="670.3" y="453.5" fill="#fff" font-size="12" letter-spacing="0.3">9540m</text><text x="53" y="533.5" fill="#fff" font-size="12" text-anchor="end" >400</text><text x="670.3" y="533.5" fill="#fff" font-size="12" letter-spacing="0.3">7500m</text><text x="53" y="590.5" fill="#fff" font-size="12" text-anchor="end" >500</text><text x="670.3" y="590.5" fill="#fff" font-size="12" letter-spacing="0.3">5820m</text><text x="53" y="634.5" fill="#fff" font-size="12" text-anchor="end" >600</text><text x="670.3" y="634.5" fill="#fff" font-size="12" letter-spacing="0.3">4401m</text><text x="53" y="669.5" fill="#fff" font-size="12" text-anchor="end" >700</text><text x="670.3" y="669.5" fill="#fff" font-size="12" letter-spacing="0.3">3159m</text><text x="53" y="698.5" fill="#fff" font-size="12" text-anchor="end" >800</text><text x="670.3" y="698.5" fill="#fff" font-size="12" letter-spacing="0.3">2050m</text><text x="53" y="723.5" fill="#fff" font-size="12" text-anchor="end" >900</text><text x="670.3" y="723.5" fill="#fff" font-size="12" letter-spacing="0.3">1042m</text><text x="53" y="744.5" fill="#fff" font-size="12" text-anchor="end" >1000</text><line x1="61.5" y1="749" x2="61.5" y2="754" stroke="#fff"/><text x="61" y="767.5" fill="#fff" font-size="12" text-anchor="middle" >-50</text><line x1="61.5" y1="788" x2="61.5" y2="793" stroke="#fff"/><text x="61" y="805" fill="#fff" font-size="12" text-anchor="middle" >0</text><line x1="61.5" y1="826" x2="61.5" y2="831" stroke="#fff"/><text x="61" y="842.5" fill="#fff" font-size="12" text-anchor="middle" >0</text><line x1="121.5" y1="749" x2="121.5" y2="754" stroke="#fff"/><text x="121" y="767.5" fill="#fff" font-size="12" text-anchor="middle" >-40</text><line x1="121.5" y1="788" x2="121.5" y2="793" stroke="#fff"/><text x="121" y="805" fill="#fff" font-size="12" text-anchor="middle" >10</text><line x1="121.5" y1="826" x2="121.5" y2="831" stroke="#fff"/><text x="121" y="842.5" fill="#fff" font-size="12" text-anchor="middle" >300</text><line x1="181.5" y1="749" x2="181.5" y2="754" stroke="#fff"/><text x="181" y="767.5" fill="#fff" font-size="12" text-anchor="middle" >-30</text><line x1="181.5" y1="788" x2="181.5" y2="793" stroke="#fff"/><text x="181" y="805" fill="#fff" font-size="12" text-anchor="middle" >20</text><line x1="181.5" y1="826" x2="181.5" y2="831" stroke="#fff"/><text x="181" y="842.5" fill="#fff" font-size="12" text-anchor="middle" >600</text><line x1="241.5" y1="749" x2="241.5" y2="754" stroke="#fff"/><text x="241" y="767.5" fill="#fff" font-size="12" text-anchor="middle" >-20</text><line x1="241.5" y1="788" x2="241.5" y2="793" stroke="#fff"/><text x="241" y="805" fill="#fff" font-size="12" text-anchor="middle" >30</text><line x1="241.5" y1="826" x2="241.5" y2="831" stroke="#fff"/><text x="241" y="842.5" fill="#fff" font-size="12" text-anchor="middle" >900</text><line x1="301.5" y1="749" x2="301.5" y2="754" stroke="#fff"/><text x="301" y="767.5" fill="#fff" font-size="12" text-anchor="middle" >-10</text><line x1="301.5" y1="788" x2="301.5" y2="793" stroke="#fff"/><text x="301" y="805" fill="#fff" font-size="12" text-anchor="middle" >40</text><line x1="301.5" y1="826" x2="301.5" y2="831" stroke="#fff"/><text x="301" y="842.5" fill="#fff" font-size="12" text-anchor="middle" >1200</text><line x1="361.5" y1="749" x2="361.5" y2="754" stroke="#fff"/><text x="361" y="767.5" fill="#fff" font-size="12" text-anchor="middle" >0</text><line x1="361.5" y1="788" x2="361.5" y2="793" stroke="#fff"/><text x="361" y="805" fill="#fff" font-size="12" text-anchor="middle" >50</text><line x1="361.5" y1="826" x2="361.5" y2="831" stroke="#fff"/><text x="361" y="842.5" fill="#fff" font-size="12" text-anchor="middle" >1500</text><line x1="421.5" y1="749" x2="421.5" y2="754" stroke="#fff"/><text x="421" y="767.5" fill="#fff" font-size="12" text-anchor="middle" >10</text><line x1="421.5" y1="788" x2="421.5" y2="793" stroke="#fff"/><text x="421" y="805" fill="#fff" font-size="12" text-anchor="middle" >60</text><line x1="421.5" y1="826" x2="421.5" y2="831" stroke="#fff"/><text x="421" y="842.5" fill="#fff" font-size="12" text-anchor="middle" >1800</text><line x1="481.5" y1="749" x2="481.5" y2="754" stroke="#fff"/><text x="481" y="767.5" fill="#fff" font-size="12" text-anchor="middle" >20</text><line x1="481.5" y1="788" x2="481.5" y2="793" stroke="#fff"/><text x="481" y="805" fill="#fff" font-size="12" text-anchor="middle" >70</text><line x1="481.5" y1="826" x2="481.5" y2="831" stroke="#fff"/><text x="481" y="842.5" fill="#fff" font-size="12" text-anchor="middle" >2100</text><line x1="541.5" y1="749" x2="541.5" y2="754" stroke="#fff"/><text x="541" y="767.5" fill="#fff" font-size="12" text-anchor="middle" >30</text><line x1="541.5" y1="788" x2="541.5" y2="793" stroke="#fff"/><text x="541" y="805" fill="#fff" font-size="12" text-anchor="middle" >80</text><line x1="541.5" y1="826" x2="541.5" y2="831" stroke="#fff"/><text x="541" y="842.5" fill="#fff" font-size="12" text-anchor="middle" >2400</text><line x1="601.5" y1="749" x2="601.5" y2="754" stroke="#fff"/><text x="601" y="767.5" fill="#fff" font-size="12" text-anchor="middle" >40</text><line x1="601.5" y1="788" x2="601.5" y2="793" stroke="#fff"/><text x="601" y="805" fill="#fff" font-size="12" text-anchor="middle" >90</text><line x1="601.5" y1="826" x2="601.5" y2="831" stroke="#fff"/><text x="601" y="842.5" fill="#fff" font-size="12" text-anchor="middle" >2700</text><line x1="661.5" y1="749" x2="661.5" y2="754" stroke="#fff"/><text x="661" y="767.5" fill="#fff" font-size="12" text-anchor="middle" >50</text><line x1="661.5" y1="788" x2="661.5" y2="793" stroke="#fff"/><text x="661" y="805" fill="#fff" font-size="12" text-anchor="middle" >100</text><line x1="661.5" y1="826" x2="661.5" y2="831" stroke="#fff"/><text x="661" y="842.5" fill="#fff" font-size="12" text-anchor="middle" >3000</text><line x1="61.5" y1="863" x2="61.5" y2="868" stroke="#fff"/><text x="61" y="879.5" fill="#fff" font-size="12" text-anchor="middle" >-100</text><line x1="136.5" y1="863" x2="136.5" y2="868" stroke="#fff"/><text x="136" y="879.5" fill="#fff" font-size="12" text-anchor="middle" >-50</text><line x1="211.5" y1="863" x2="211.5" y2="868" stroke="#fff"/><text x="211" y="879.5" fill="#fff" font-size="12" text-anchor="middle" >0</text><line x1="286.5" y1="863" x2="286.5" y2="868" stroke="#fff"/><text x="286" y="879.5" fill="#fff" font-size="12" text-anchor="middle" >50</text><line x1="361.5" y1="863" x2="361.5" y2="868" stroke="#fff"/><text x="361" y="879.5" fill="#fff" font-size="12" text-anchor="middle" >100</text><line x1="436.5" y1="863" x2="436.5" y2="868" stroke="#fff"/><text x="436" y="879.5" fill="#fff" font-size="12" text-anchor="middle" >150</text><line x1="511.5" y1="863" x2="511.5" y2="868" stroke="#fff"/><text x="511" y="879.5" fill="#fff" font-size="12" text-anchor="middle" >200</text><line x1="586.5" y1="863" x2="586.5" y2="868" stroke="#fff"/><text x="586" y="879.5" fill="#fff" font-size="12" text-anchor="middle" >250</text><line x1="661.5" y1="863" x2="661.5" y2="868" stroke="#fff"/><text x="661" y="879.5" fill="#fff" font-size="12" text-anchor="middle" >300</text><text x="277" y="780.5" fill="#fff" font-size="12.5" textLength="170" lengthAdjust="spacingAndGlyphs" xml:space="preserve">Temperature, Dewpoint  [ °C ]</text><text x="307" y="818.5" fill="#fff" font-size="12.5" textLength="106" lengthAdjust="spacingAndGlyphs" xml:space="preserve">Windspeed  [ knt ]</text><text x="293" y="857" fill="#fff" font-size="12.5" textLength="136" lengthAdjust="spacingAndGlyphs" xml:space="preserve">CAPE, CINH * 5  [ J/kg ]</text><text x="260" y="893" fill="#fff" font-size="12.5" textLength="203" lengthAdjust="spacingAndGlyphs" xml:space="preserve">Storm Relative Helicity  [ m^2/s^2 ]</text><text x="894" y="40.0" fill="#fff" font-size="12.8" text-decoration="underline">Parameter</text><text x="1064" y="40.0" fill="#fff" font-size="12.8" text-decoration="underline">Value LCL</text><text x="1152" y="40.0" fill="#fff" font-size="12.8" text-decoration="underline">Value CCL</text><text x="1230" y="40.0" fill="#fff" font-size="12.8" text-decoration="underline">Unit</text><text x="894" y="62.0" fill="#fff" font-size="12.8" >Convective Temperature:</text><text x="1124" y="62.0" fill="#ff0000" font-size="12.8" text-anchor="end" >29.99</text><text x="1230" y="62.0" fill="#fff" font-size="12.8" >[°C]</text><text x="894" y="79.0" fill="#fff" font-size="12.8" >Snowfall Height:</text><text x="1124" y="79.0" fill="#ffffff" font-size="12.8" text-anchor="end" >3785.29</text><text x="1230" y="79.0" fill="#fff" font-size="12.8" >[m]</text><text x="894" y="103.5" fill="#fff" font-size="12.8" text-decoration="underline">Parcels: Using 50mB mean layer LCL + CCL</text><text x="894" y="123.7" fill="#fff" font-size="12.8" >Lifted Index:</text><text x="1124" y="123.7" fill="#ff0000" font-size="12.8" text-anchor="end" >-2.73</text><text x="1214" y="123.7" fill="#ff0000" font-size="12.8" text-anchor="end" >-4.31</text><text x="1230" y="123.7" fill="#fff" font-size="12.8" >[°C]</text><text x="894" y="140.7" fill="#fff" font-size="12.8" >CAPE:</text><text x="1124" y="140.7" fill="#ff0000" font-size="12.8" text-anchor="end" >762.71</text><text x="1214" y="140.7" fill="#ff0000" font-size="12.8" text-anchor="end" >1327.43</text><text x="1230" y="140.7" fill="#fff" font-size="12.8" >[J/kg]</text><text x="894" y="157.7" fill="#fff" font-size="12.8" >CINH | LSI (Inversion: 850mB):</text><text x="1124" y="157.7" fill="#ff0000" font-size="12.8" text-anchor="end" >66.56</text><text x="1124" y="157.7" fill="#ffffff" font-size="12.8" >,</text><text x="1136" y="157.7" fill="#ffff00" font-size="12.8" >2.89</text><text x="1230" y="157.7" fill="#fff" font-size="12.8" >[J/kg], [°C]</text><text x="894" y="174.7" fill="#fff" font-size="12.8" >CAPE Virt.:</text><text x="1124" y="174.7" fill="#ff0000" font-size="12.8" text-anchor="end" >870.45</text><text x="1214" y="174.7" fill="#ff0000" font-size="12.8" text-anchor="end" >1202.36</text><text x="1230" y="174.7" fill="#fff" font-size="12.8" >[J/kg]</text><text x="894" y="191.7" fill="#fff" font-size="12.8" >CINH Virt.:</text><text x="1124" y="191.7" fill="#ff0000" font-size="12.8" text-anchor="end" >37.65</text><text x="1230" y="191.7" fill="#fff" font-size="12.8" >[J/kg]</text><text x="894" y="208.7" fill="#fff" font-size="12.8" >3km SFC CAPE | IL CAPE:</text><text x="1124" y="208.7" fill="#00ff00" font-size="12.8" text-anchor="end" >21.04</text><text x="1124" y="208.7" fill="#ffffff" font-size="12.8" >,</text><text x="1136" y="208.7" fill="#ff0000" font-size="12.8" >598.86</text><text x="1230" y="208.7" fill="#fff" font-size="12.8" >[J/kg]</text><text x="894" y="225.7" fill="#fff" font-size="12.8" >DCAPE (LFS = 530mB):</text><text x="1124" y="225.7" fill="#ff0000" font-size="12.8" text-anchor="end" >743.60</text><text x="1230" y="225.7" fill="#fff" font-size="12.8" >[J/kg]</text><text x="894" y="242.7" fill="#fff" font-size="12.8" >850-600 Lapse Rate:</text><text x="1124" y="242.7" fill="#ff0000" font-size="12.8" text-anchor="end" >20.17</text><text x="1230" y="242.7" fill="#fff" font-size="12.8" >[°C]</text><text x="894" y="259.7" fill="#fff" font-size="12.8" >FM Hail Size | SHIP | LHP:</text><text x="1124" y="259.7" fill="#ffff00" font-size="12.8" text-anchor="end" >1.9 - 2.5</text><text x="1124" y="259.7" fill="#ffffff" font-size="12.8" >,</text><text x="1136" y="259.7" fill="#00ff00" font-size="12.8" >0.53</text><text x="1161" y="259.7" fill="#ffffff" font-size="12.8" >,</text><text x="1173" y="259.7" fill="#00ff00" font-size="12.8" >0.00</text><text x="1230" y="259.7" fill="#fff" font-size="12.8" >[cm], [1], [1]</text><text x="894" y="276.7" fill="#fff" font-size="12.8" >Estofex Exp. Hail Param:</text><text x="1124" y="276.7" fill="#ffff00" font-size="12.8" text-anchor="end" >2.51</text><text x="1230" y="276.7" fill="#fff" font-size="12.8" >[cm]</text><text x="894" y="293.7" fill="#fff" font-size="12.8" >Max. Hail Size (OLD, MU, IL):</text><text x="1124" y="293.7" fill="#ff0000" font-size="12.8" text-anchor="end" >3.58</text><text x="1124" y="293.7" fill="#ffffff" font-size="12.8" >,</text><text x="1136" y="293.7" fill="#ff0000" font-size="12.8" >3.68</text><text x="1161" y="293.7" fill="#ffffff" font-size="12.8" >,</text><text x="1173" y="293.7" fill="#ff0000" font-size="12.8" >3.54</text><text x="1230" y="293.7" fill="#fff" font-size="12.8" >[cm]</text><text x="894" y="313.7" fill="#fff" font-size="12.8" >LCL / CCL (AGL):</text><text x="1124" y="313.7" fill="#ffff00" font-size="12.8" text-anchor="end" >1533.16</text><text x="1214" y="313.7" fill="#ffff00" font-size="12.8" text-anchor="end" >1921.83</text><text x="1230" y="313.7" fill="#fff" font-size="12.8" >[m]</text><text x="894" y="330.7" fill="#fff" font-size="12.8" >Convective Height:</text><text x="1124" y="330.7" fill="#ff0000" font-size="12.8" text-anchor="end" >8.68</text><text x="1214" y="330.7" fill="#ff0000" font-size="12.8" text-anchor="end" >8.69</text><text x="1230" y="330.7" fill="#fff" font-size="12.8" >[km]</text><text x="894" y="355.5" fill="#fff" font-size="12.8" text-decoration="underline">Convective Indices</text><text x="894" y="375.7" fill="#fff" font-size="12.8" >Showalter Index:</text><text x="1124" y="375.7" fill="#ff0000" font-size="12.8" text-anchor="end" >-0.45</text><text x="1230" y="375.7" fill="#fff" font-size="12.8" >[°C]</text><text x="894" y="392.7" fill="#fff" font-size="12.8" >Modified Thompson Index:</text><text x="1124" y="392.7" fill="#ff0000" font-size="12.8" text-anchor="end" >39.81</text><text x="1230" y="392.7" fill="#fff" font-size="12.8" >[°C]</text><text x="894" y="409.7" fill="#fff" font-size="12.8" >Total Totals Index:</text><text x="1124" y="409.7" fill="#ff0000" font-size="12.8" text-anchor="end" >49.40</text><text x="1230" y="409.7" fill="#fff" font-size="12.8" >[°C]</text><text x="894" y="426.7" fill="#fff" font-size="12.8" >KO Index:</text><text x="1124" y="426.7" fill="#ff0000" font-size="12.8" text-anchor="end" >-18.82</text><text x="1230" y="426.7" fill="#fff" font-size="12.8" >[1]</text><text x="894" y="443.7" fill="#fff" font-size="12.8" >Craven SigSvr / 1000:</text><text x="1124" y="443.7" fill="#ff0000" font-size="12.8" text-anchor="end" >9.73</text><text x="1230" y="443.7" fill="#fff" font-size="12.8" >[m^3/s^3]</text><text x="894" y="460.7" fill="#fff" font-size="12.8" >SCP RM (new, old):</text><text x="1124" y="460.7" fill="#ff0000" font-size="12.8" text-anchor="end" >1.72</text><text x="1124" y="460.7" fill="#ffffff" font-size="12.8" >,</text><text x="1136" y="460.7" fill="#00ff00" font-size="12.8" >0.12</text><text x="1230" y="460.7" fill="#fff" font-size="12.8" >[1]</text><text x="894" y="477.7" fill="#fff" font-size="12.8" >STP (new, old):</text><text x="1124" y="477.7" fill="#00ff00" font-size="12.8" text-anchor="end" >0.07</text><text x="1124" y="477.7" fill="#ffffff" font-size="12.8" >,</text><text x="1136" y="477.7" fill="#00ff00" font-size="12.8" >0.12</text><text x="1230" y="477.7" fill="#fff" font-size="12.8" >[1]</text><text x="894" y="494.7" fill="#fff" font-size="12.8" >SB STP (fix) | CWASP:</text><text x="1124" y="494.7" fill="#00ff00" font-size="12.8" text-anchor="end" >0.07</text><text x="1124" y="494.7" fill="#ffffff" font-size="12.8" >,</text><text x="1136" y="494.7" fill="#ffff00" font-size="12.8" >53.54</text><text x="1230" y="494.7" fill="#fff" font-size="12.8" >[1], [%]</text><text x="894" y="511.7" fill="#fff" font-size="12.8" >DCP | MMP | MSP:</text><text x="1124" y="511.7" fill="#ff0000" font-size="12.8" text-anchor="end" >0.86</text><text x="1124" y="511.7" fill="#ffffff" font-size="12.8" >,</text><text x="1136" y="511.7" fill="#00ff00" font-size="12.8" >61.54</text><text x="1168" y="511.7" fill="#ffffff" font-size="12.8" >,</text><text x="1180" y="511.7" fill="#00ff00" font-size="12.8" >46.86</text><text x="1230" y="511.7" fill="#fff" font-size="12.8" >[1], [%], [%]</text><text x="894" y="528.7" fill="#fff" font-size="12.8" >MB Comp | SHERBE:</text><text x="1124" y="528.7" fill="#00ff00" font-size="12.8" text-anchor="end" >0.00</text><text x="1124" y="528.7" fill="#ffffff" font-size="12.8" >,</text><text x="1136" y="528.7" fill="#ff0000" font-size="12.8" >1.03</text><text x="1230" y="528.7" fill="#fff" font-size="12.8" >[1], [1]</text><text x="894" y="545.7" fill="#fff" font-size="12.8" >Exp. Supercell Index CH:</text><text x="1124" y="545.7" fill="#ff0000" font-size="12.8" text-anchor="end" >3.34</text><text x="1230" y="545.7" fill="#fff" font-size="12.8" >[1]</text><text x="894" y="562.7" fill="#fff" font-size="12.8" >SWISS 12 Index:</text><text x="1124" y="562.7" fill="#ff0000" font-size="12.8" text-anchor="end" >-7.86</text><text x="1230" y="562.7" fill="#fff" font-size="12.8" >[1]</text><text x="894" y="579.7" fill="#fff" font-size="12.8" >Precipitable Water:</text><text x="1124" y="579.7" fill="#ffff00" font-size="12.8" text-anchor="end" >26.96</text><text x="1230" y="579.7" fill="#fff" font-size="12.8" >[mm]</text><text x="894" y="604.5" fill="#fff" font-size="12.8" text-decoration="underline">Wind Parameters</text><text x="894" y="624.7" fill="#fff" font-size="12.8" >Storm Direction | Motion:</text><text x="1124" y="624.7" fill="#ffffff" font-size="12.8" text-anchor="end" >270.10</text><text x="1124" y="624.7" fill="#ffffff" font-size="12.8" >,</text><text x="1136" y="624.7" fill="#ff0000" font-size="12.8" >25.52</text><text x="1230" y="624.7" fill="#fff" font-size="12.8" >[°], [knt]</text><text x="894" y="641.7" fill="#fff" font-size="12.8" >500m Critical Angle:</text><text x="1124" y="641.7" fill="#ffff00" font-size="12.8" text-anchor="end" >63.41</text><text x="1230" y="641.7" fill="#fff" font-size="12.8" >[°]</text><text x="894" y="661.7" fill="#fff" font-size="12.8" >SR Wind Sfc-2km:</text><text x="1124" y="661.7" fill="#ff0000" font-size="12.8" text-anchor="end" >20.31</text><text x="1230" y="661.7" fill="#fff" font-size="12.8" >[knt]</text><text x="894" y="678.7" fill="#fff" font-size="12.8" >SR Wind 4km-6km:</text><text x="1124" y="678.7" fill="#00ff00" font-size="12.8" text-anchor="end" >8.05</text><text x="1230" y="678.7" fill="#fff" font-size="12.8" >[knt]</text><text x="894" y="695.7" fill="#fff" font-size="12.8" >SR Wind 9km-11km:</text><text x="1124" y="695.7" fill="#ff0000" font-size="12.8" text-anchor="end" >16.34</text><text x="1230" y="695.7" fill="#fff" font-size="12.8" >[knt] HP</text><text x="894" y="715.7" fill="#fff" font-size="12.8" >Effective Shear 6000:</text><text x="1124" y="715.7" fill="#ffff00" font-size="12.8" text-anchor="end" >24.79</text><text x="1230" y="715.7" fill="#fff" font-size="12.8" >[knt]</text><text x="894" y="735.7" fill="#fff" font-size="12.8" >Bulk Richardson Number:</text><text x="1124" y="735.7" fill="#ffff00" font-size="12.8" text-anchor="end" >116.36</text><text x="1214" y="735.7" fill="#ffff00" font-size="12.8" text-anchor="end" >202.52</text><text x="1230" y="735.7" fill="#fff" font-size="12.8" >[1]</text><text x="894" y="755.7" fill="#fff" font-size="12.8" >3km Effective SRH:</text><text x="1124" y="755.7" fill="#00ff00" font-size="12.8" text-anchor="end" >65.87</text><text x="1230" y="755.7" fill="#fff" font-size="12.8" >[m^2/s^2]</text><text x="894" y="772.7" fill="#fff" font-size="12.8" >Max 3km SRH (0-2km) | AGL:</text><text x="1124" y="772.7" fill="#ff0000" font-size="12.8" text-anchor="end" >152.17</text><text x="1124" y="772.7" fill="#ffffff" font-size="12.8" >,</text><text x="1136" y="772.7" fill="#00ff00" font-size="12.8" >1527.00</text><text x="1230" y="772.7" fill="#fff" font-size="12.8" >[m^2/s^2], [m]</text><text x="894" y="792.7" fill="#fff" font-size="12.8" >3km Energy Helicity Index:</text><text x="1124" y="792.7" fill="#00ff00" font-size="12.8" text-anchor="end" >0.31</text><text x="1214" y="792.7" fill="#00ff00" font-size="12.8" text-anchor="end" >0.55</text><text x="1230" y="792.7" fill="#fff" font-size="12.8" >[1]</text><text x="894" y="809.7" fill="#fff" font-size="12.8" >3km Vorticity Gen. Pot.:</text><text x="1124" y="809.7" fill="#00ff00" font-size="12.8" text-anchor="end" >0.08</text><text x="1214" y="809.7" fill="#00ff00" font-size="12.8" text-anchor="end" >0.11</text><text x="1230" y="809.7" fill="#fff" font-size="12.8" >[m/s^2]</text><rect x="729" y="827" width="15" height="8" fill="#ff0000"/><text x="753.5" y="835.8" fill="#ff0000" font-size="12.8" >Temperature Profile</text><rect x="729" y="847" width="15" height="8" fill="#00ffff"/><text x="753.5" y="855.8" fill="#00ffff" font-size="12.8" >Dewpoint Profile</text><rect x="729" y="867" width="15" height="8" fill="#00ff00"/><text x="753.5" y="875.8" fill="#00ff00" font-size="12.8" >OBS Windspeed Profile</text><rect x="729" y="887" width="15" height="8" fill="#ff0080"/><text x="753.5" y="895.8" fill="#ff0080" font-size="12.8" >SR Windspeed Profile</text><rect x="729" y="907" width="15" height="8" fill="#c8c000"/><text x="753.5" y="915.8" fill="#c8c000" font-size="12.8" >Sfc-3km Storm Relative Helicity Profile</text><rect x="729" y="927" width="15" height="8" fill="#403c0c"/><text x="753.5" y="935.8" fill="#403c0c" font-size="12.8" >Effective Layer (CAPE &gt;= 100 J/kg)</text><rect x="1080" y="827" width="15" height="8" fill="#00ff00"/><text x="1103.5" y="835.8" fill="#00ff00" font-size="12.8" >No / Non Severe Thunderstorms</text><rect x="1080" y="847" width="15" height="8" fill="#ffff00"/><text x="1103.5" y="855.8" fill="#ffff00" font-size="12.8" >Scattered / Moderate Thunderstorms</text><rect x="1080" y="867" width="15" height="8" fill="#ff0000"/><text x="1103.5" y="875.8" fill="#ff0000" font-size="12.8" >Widespread / Severe Thunderstorms</text></svg></body></html>
